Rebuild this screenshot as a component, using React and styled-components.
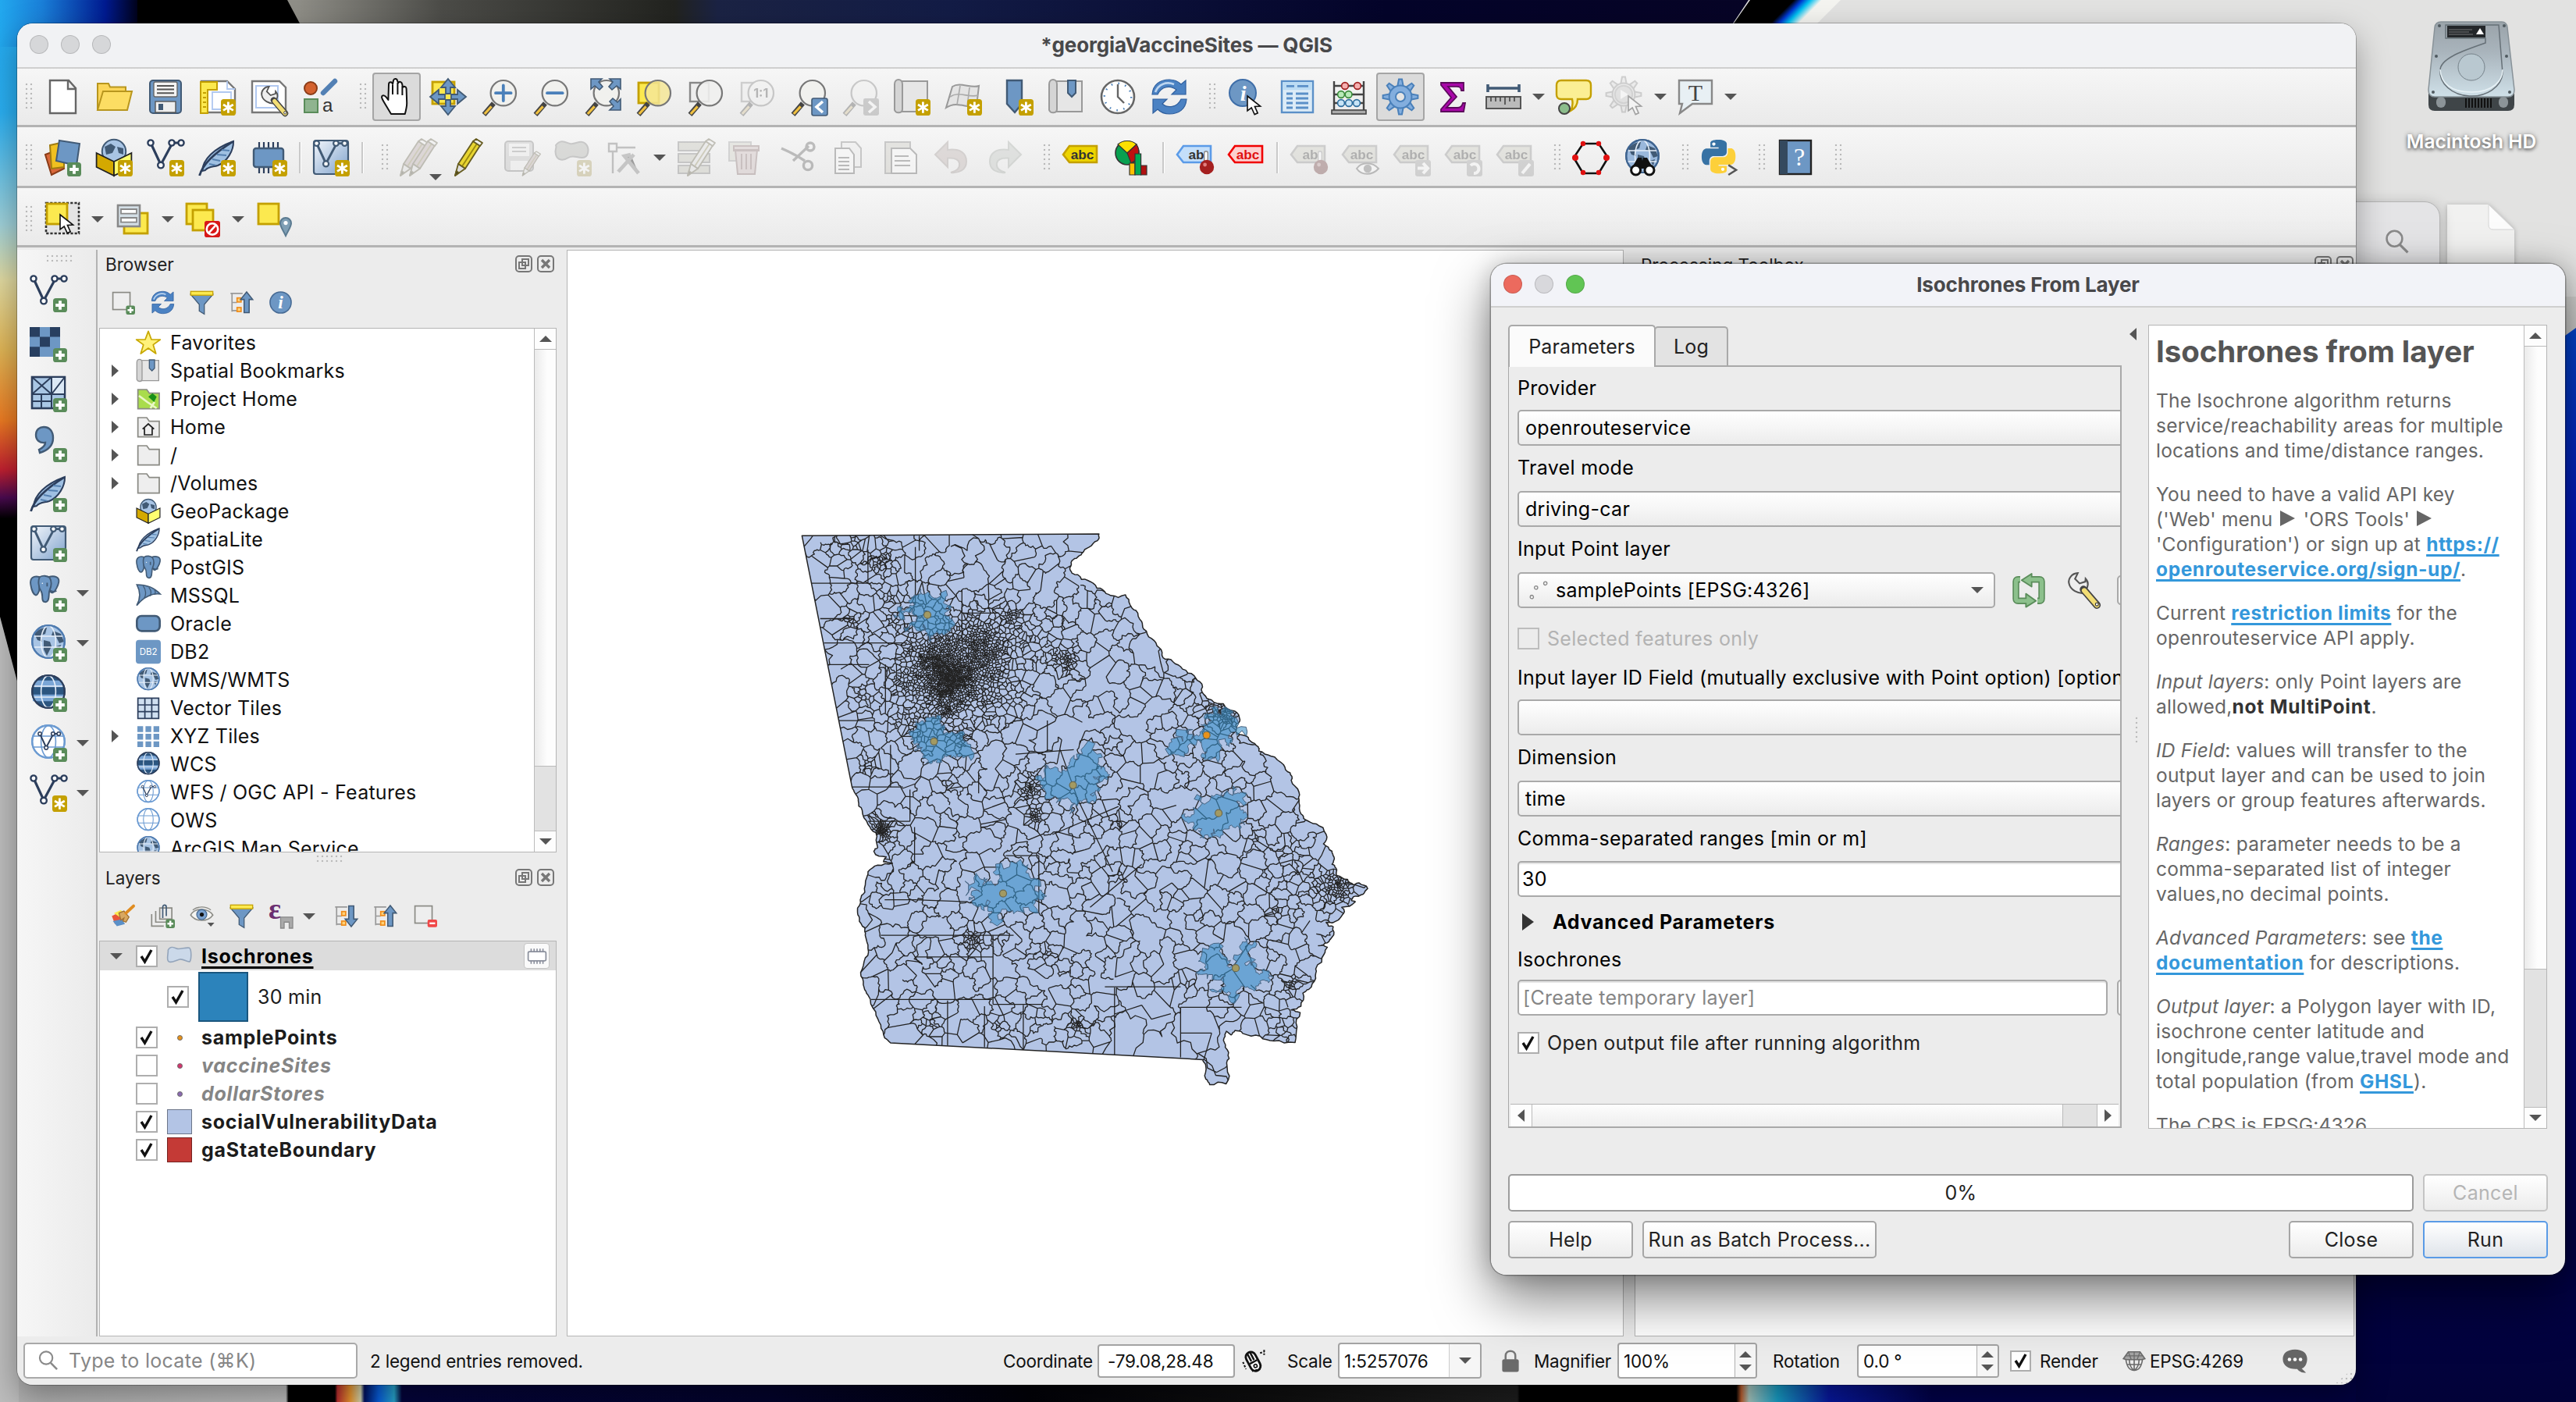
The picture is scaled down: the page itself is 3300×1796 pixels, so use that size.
import React, { useMemo } from 'react';
import styled, { createGlobalStyle, css } from 'styled-components';

const Global = createGlobalStyle`
  * { box-sizing: border-box; }
  html, body { margin: 0; padding: 0; }
  body { font-family: Inter, "Liberation Sans", sans-serif; font-size: 25px; color: #000; overflow: hidden; }
`;

/* ------------------------------------------------------------------ icons */

const NAVY = '#2c3e5c';
const BLUE = '#6d97c4';
const BLUED = '#415a75';
const GOLD = '#c4a000';
const YEL = '#fce94f';

const Plus = () => (
  <g>
    <rect x="15" y="15" width="9" height="9" rx="1.8" fill="#5a8c5a" />
    <path d="M19.5 16.6v5.8M16.6 19.5h5.8" stroke="#fff" strokeWidth="1.9" />
  </g>
);
const Star = () => (
  <g>
    <rect x="14.5" y="13.5" width="9.5" height="10.5" rx="1.8" fill={GOLD} />
    <path d="M19.2 15.2v7.2M16 17l6.4 3.7M16 20.7l6.4-3.7" stroke="#fff" strokeWidth="1.4" />
  </g>
);
const Cursor = ({ x = 12, y = 12 }) => (
  <path transform={`translate(${x} ${y})`} d="M0 0v9.5l2.6-2 2 4.3 2-.9-1.9-4.2 3.6-.2z" fill="#fff" stroke="#111" strokeWidth=".8" />
);
const Lens = ({ sign, fill = '#f1f1ee', pre, children }) => (
  <>
    {pre}
    <path d="M8.2 16.2L2 23.4" stroke="#444" strokeWidth="3.2" />
    <path d="M6.8 18.2L2.4 23" stroke="#f0c040" strokeWidth="1.6" />
    <circle cx="14.4" cy="9.6" r="8.1" fill={fill} stroke="#777" strokeWidth="1.1" />
    {sign && <path d={sign} stroke="#4a80ba" strokeWidth="1.9" strokeLinecap="round" />}
    {children}
  </>
);
const V = ({ s = 1, x = 0, y = 0, c = NAVY }) => (
  <g transform={`translate(${x} ${y}) scale(${s})`} fill="#fff" stroke={c} strokeWidth="1.2">
    <path d="M2.5 2.5L9 16.5L16.5 2.5h6" fill="none" strokeWidth="1.6" />
    <circle cx="2.5" cy="2.5" r="1.8" /><circle cx="9" cy="16.8" r="1.9" />
    <circle cx="16" cy="2.5" r="1.8" /><circle cx="22" cy="2.5" r="1.8" />
  </g>
);
const Feather = () => (
  <>
    <path d="M2.5 20.5C3 13 10 6 22.5 1.5c.2 6-4 13-10 15.500-3 1-6 .5-8 3z" fill="#9fc0e2" stroke={NAVY} strokeWidth="1" />
    <path d="M.8 23.500C3 15 12 8 22 1.800" fill="none" stroke={NAVY} strokeWidth="1.4" />
    <path d="M9 13l5 1M12 10l6 .5M15 7l5 .5M7 16l4 .8" stroke="#5580b0" strokeWidth=".9" />
  </>
);
const Globe = ({ fill = '#a8c4e4', line = '#4f7bb0', land, dark }) => (
  <g>
    <circle cx="12" cy="11" r="10.400" fill={fill} stroke={line} strokeWidth="1.1" />
    {land && <path d="M3 6c3-3 5-4 8-4l-1 4-3 1 1 4-3-1zM9 10l4 1 1 3-3 6-2-4zM15 4l5 2 2 5-3 1-2-4-3-1zM17 14l3-1-1 4z" fill={BLUED} />}
    {dark && <path d="M3 6h18M2 15h20" stroke="#7ba6d6" strokeWidth="4.200" />}
    <g fill="none" stroke={dark || land ? '#e8f0fa' : line} strokeWidth=".8">
      <ellipse cx="12" cy="11" rx="4.700" ry="10.200" /><path d="M2.500 7.500h19M2.500 14.500h19" />
    </g>
    <circle cx="12" cy="11" r="10.400" fill="none" stroke={line} strokeWidth="1.1" />
  </g>
);
const Elephant = () => (
  <g fill={BLUE} stroke={BLUED} strokeWidth="1.2" strokeLinejoin="round">
    <path d="M8 2C3 .5 0 3 .8 8c.6 4 2.200 8 4 8.500 1 .2 2-1.500 2.800-3.500z" />
    <path d="M15 2c5-1.500 9 0 8.300 4-.5 3-3 8-5 8.500-1 .2-2-1-2.500-2z" />
    <path d="M8 2c2.500-1.500 6-1.200 8 .5 1.500 2.500 1.800 6 0 10-1 2 0 6-1.500 8.500-1 1.600-3.800 1.300-4.200-1-.4-2.500.2-5-1.300-7-2-3-2.500-8-1-11z" />
    <circle cx="10.200" cy="7" r=".5" fill="#fff" stroke="none" /><path d="M14 6.500v3M16 12.500c2 1.500 4 1.500 5.500.5" fill="none" />
  </g>
);
const Refresh = () => (
  <g fill="#4b82c3" stroke="#2f5f9e" strokeWidth=".6">
    <path d="M1 10.500C1.500 4 6 1 12 1c3 0 5.500 1 7.500 3L22.500 1.500v9h-9l3-3C13 4.500 7 5 4.500 10.500z" />
    <path d="M23 13.500C22.500 20 18 23 12 23c-3 0-5.500-1-7.500-3L1.500 22.500v-9h9l-3 3c3.500 3 9.500 2.500 12-3z" />
    <path d="M3 9C5 4 10 2 15 4" stroke="#bcd5f0" strokeWidth="1.3" fill="none" />
  </g>
);
const Pencil = ({ c = '#e8d531' }) => (
  <g stroke="#665c20" strokeWidth=".9" strokeLinejoin="round">
    <path d="M4.500 16L14 1.500l4.500 2.800L9 19z" fill={c} /><path d="M7 17.500l9.500-14.500" stroke="#9a8a10" />
    <path d="M4.500 16L2.500 23.500 9 19z" fill="#ddd" /><path d="M3.300 20.500l-.8 3 2.400-1.800z" fill="#222" />
    <path d="M14 1.500l2-1.500 4 2.500-1.500 2z" fill="#eee" />
  </g>
);
const Tag = ({ bg = '#edd400', bd = GOLD, t = 'abc', c = '#333' }) => (
  <>
    <path d="M1 10L5 4.500h17.500v10.500H5z" fill={bg} stroke={bd} strokeWidth="1.300" />
    <text x="13.300" y="12.800" fontSize="8.600" fontWeight="600" textAnchor="middle" fill={c} fontFamily='"Liberation Sans", sans-serif'>{t}</text>
  </>
);
const Pin = () => (<><path d="M19.500 9v6" stroke="#888" strokeWidth="3" strokeLinecap="round" /><path d="M19.500 9v6" stroke="#fff" strokeWidth="1.600" strokeLinecap="round" /><circle cx="20" cy="18" r="4.600" fill="#a52020" /><circle cx="18.800" cy="16.500" r="1.200" fill="#e08080" /></>);
const Badge = ({ d }) => (<><rect x="14.500" y="13.500" width="10" height="10.500" rx="1.500" fill="#999" /><path d={d} fill="none" stroke="#fff" strokeWidth="2" /></>);
const Scroll = () => (<><path d="M4 2h18v19.500H4z" fill="#e6e6e6" stroke="#999" /><path d="M1 4c0-4 5-4 5 0v16c0 2.500-4 3-5 .5z" fill="#d5d5d5" stroke="#999" /></>);
const Ruler = () => (<><path d="M2 4v5M22 4v5M2 6.500h20" stroke={BLUED} strokeWidth="1.800" /><rect x="1" y="12" width="22" height="7.500" fill="#bbb" stroke="#555" /><path d="M4 12v3M7 12v3M10 12v3M13 12v5M16 12v3M19 12v3" stroke="#444" strokeWidth=".8" /></>);
const TreeArrow = ({ down }) => (
  <>
    <path d="M1 3h12M2.500 3v18M2.500 12h5M2.500 20h5" stroke="#999" strokeWidth="1.300" fill="none" />
    <rect x="7.500" y="7.500" width="4" height="4" fill="#ffd27a" stroke="#f08c1a" strokeWidth="1.300" /><rect x="7.500" y="17" width="4" height="4" fill="#ffd27a" stroke="#f08c1a" strokeWidth="1.300" />
    <path transform={down ? 'matrix(1 0 0 -1 0 24)' : undefined} d="M17 1.500l6 7.500h-3.500v13h-5V9H11z" fill={BLUE} stroke={BLUED} strokeWidth="1.200" />
  </>
);
const Folder = ({ fill = '#eee', children }) => (<><path d="M2 21.500V3h8.500l2.500 3.500h9.500v15z" fill={fill} stroke="#8a8a84" strokeWidth="1.300" />{children}</>);
const Box3d = () => (<><circle cx="12" cy="8" r="7.600" fill="#a8c4e4" stroke={BLUED} /><path d="M6 5l4-2 3 2-2 4-4 1zM14 5l4 1v4l-3-1z" fill={BLUED} /><path d="M.8 9L12 14.500V23.500L.8 18z" fill="#d4a900" stroke="#222" strokeWidth=".9" /><path d="M23.200 9L12 14.500V23.500L23.200 18z" fill="#ffff70" stroke="#222" strokeWidth=".9" /></>);
const Wrench = ({ x = 0, y = 0, s = 1 }) => (
  <g transform={`translate(${x} ${y}) scale(${s})`}>
    <path d="M1 6c0-3 3-6 7-5.500L5.500 4l2.500 3.500L12 7l.5-2C14.500 8 13 11 11.500 12l-2 2.500C6 14 1 11 1 6z" fill="#eee" stroke="#555" strokeWidth="1.100" transform="rotate(-10 8 8)" />
    <path d="M10.500 11.500l9 10.500" stroke="#444" strokeWidth="5" strokeLinecap="round" /><path d="M11 12.200l8.500 9.800" stroke="#f2dd74" strokeWidth="3.200" strokeLinecap="round" /><circle cx="19.500" cy="21.500" r="1" fill="#fff" stroke="#333" strokeWidth=".6" />
  </g>
);
const Gear = ({ fill, stroke }) => (
  <g fill={fill} stroke={stroke} strokeWidth="1">
    {[0, 45, 90, 135, 180, 225, 270, 315].map((a) => <path key={a} transform={`rotate(${a} 12 12)`} d="M10.200 5L11 .8h2L13.800 5z" />)}
    <circle cx="12" cy="12" r="7.200" /><circle cx="12" cy="12" r="3" fill="#e4e4e4" />
  </g>
);
const Chip = ({ y = 0 }) => (<g transform={`translate(0 ${y})`}><path d="M6 1v20M9 1v20M12 1v20M15 1v20M18 1v20" stroke={NAVY} strokeWidth="1.100" /><rect x="2.500" y="5" width="19" height="12" rx="1.500" fill={BLUE} stroke={BLUED} strokeWidth="1.200" /></g>);
const VBox = () => (<><defs><linearGradient id="vb" x1="0" y1="0" x2="1" y2="1"><stop offset="0" stopColor="#f2f6fb" /><stop offset="1" stopColor="#7fa2cc" /></linearGradient></defs><rect x="1" y="1" width="22" height="21.500" rx="1.500" fill="url(#vb)" stroke={BLUED} strokeWidth="1.100" /><V s={0.92} x={0.500} y={0.500} c={BLUED} /></>);

const ICONS = {
  newFile: <path d="M4 1.500h12l4.500 5v16H4zM15.500 1.500V7h5" fill="#fff" stroke="#666" strokeWidth="1.200" />,
  open: <><path d="M1.500 20V3.500h7l1 2.200h10V20z" fill="#fbd65a" stroke="#b8961e" /><path d="M1.500 20.500L5 8.500h18.500L20.500 20.500z" fill="#fcdd63" stroke="#b8961e" /></>,
  save: <><rect x="2" y="1.500" width="20" height="21" rx="2" fill={BLUE} stroke={BLUED} /><rect x="4.500" y="2.500" width="15" height="9.500" rx="1" fill="#f3f3f3" stroke="#666" strokeWidth=".7" /><path d="M6.500 5h11M6.500 7.300h11M6.500 9.600h11" stroke="#555" /><rect x="5.500" y="15" width="13" height="7" fill="#eee" stroke="#555" strokeWidth=".7" /><rect x="7.500" y="16.500" width="3" height="4" fill={BLUED} /></>,
  layout: <><path d="M2 2h16.500l5 5v15H2z" fill="#fff" stroke="#777" strokeWidth="1.200" /><path d="M18.500 2v5h5M9 9h12v11H9z" fill="none" stroke="#b0c8f0" strokeWidth=".9" /><path d="M1.500 2.500h10.500v5l-6 0v15h-4.500z" fill={YEL} stroke={GOLD} /><path d="M3 9.500h2M3 12.500h2M3 15.500h2M3 18.500h2" stroke={GOLD} /><Star /></>,
  layoutMgr: <><path d="M1.500 2H19l4 4v16H1.500z" fill="#fff" stroke="#777" strokeWidth="1.200" /><path d="M4 5h14v14H4z" fill="#fff" stroke="#b0c8f0" /><Wrench x={7} y={5} s={0.8} /></>,
  style: <><circle cx="6" cy="6.500" r="4" fill="#d4622f" stroke="#8a3c18" /><path d="M14 9.500l7.500-7.500" stroke="#5280b4" strokeWidth="3.200" strokeLinecap="round" /><rect x="2" y="13.500" width="8.500" height="8.500" fill="#8fb48f" stroke="#5a8c5a" /><text x="13.500" y="21.500" fontSize="12" fill="#333" fontFamily='"Liberation Sans", sans-serif'>a</text></>,
  hand: <path d="M8.500 23L4 15.500c-1.500-2.500-2-3.800-.8-4.300 1.300-.4 2.300 1 3.500 2.800L7 4c0-1.800 2.300-1.900 2.500 0L10 1.500c.4-1.500 2.300-1.300 2.500.2l.6 1.500c.6-1.300 2.300-.9 2.500.7l.4 2.100c.7-1 2.200-.6 2.300.8L18.600 16c0 2-.4 4-1.200 7zM9.500 4.500v6M12.700 3v7.500M15.700 5v6" fill="#fff" stroke="#111" strokeWidth="1" strokeLinejoin="round" />,
  panSel: <><rect x="2" y="2.500" width="14" height="14" fill={YEL} stroke={GOLD} strokeWidth="1.400" /><g fill={BLUE} stroke={BLUED} strokeWidth=".9"><path d="M12 .5l4.500 5.500h-3v4h-3V6h-3z" /><path d="M12 23.500l4.500-5.500h-3v-4h-3v4h-3z" /><path d="M.5 12L6 7.500v3h4v3H6v3z" /><path d="M23.500 12L18 7.500v3h-4v3h4v3z" /></g></>,
  zoomIn: <Lens sign="M9.500 9.600h9.800M14.400 4.700v9.800" />,
  zoomOut: <Lens sign="M9.500 9.600h9.800" />,
  zoomFull: <><Lens /><g fill={BLUE} stroke={BLUED} strokeWidth=".8"><path d="M4.500.5h7l-2 2 2.500 3-2 2-3-2.500-2.500 2z" /><path d="M23.500.5h-7l2 2-2.500 3 2 2 3-2.500 2.500 2z" /><path d="M23.500 20.500v-7l-2 2-3-2.500-2 2 2.500 3-2.500 2.500z" /></g></>,
  zoomSel: <Lens fill="rgba(244,230,150,.85)" pre={<rect x="2" y="3" width="13" height="13" fill={YEL} stroke={GOLD} strokeWidth="1.400" />} />,
  zoomLayer: <Lens fill="rgba(240,240,238,.9)" pre={<rect x="2" y="3" width="12" height="12" fill="#eee" stroke="#888" strokeWidth="1.200" />} />,
  zoomNative: <Lens pre={<rect x="2" y="3" width="12" height="12" fill="#eee" stroke="#888" strokeWidth="1.200" />}><text x="14.400" y="12.500" fontSize="8" fontWeight="700" textAnchor="middle" fill="#444">1:1</text></Lens>,
  zoomLast: <Lens><rect x="14" y="13" width="10" height="11" rx="1.200" fill={BLUE} stroke={BLUED} strokeWidth=".8" /><path d="M21 15l-4 3.500 4 3.500" fill="none" stroke="#fff" strokeWidth="1.800" /></Lens>,
  zoomNext: <Lens><rect x="14" y="13" width="10" height="11" rx="1.200" fill="#888" /><path d="M17.500 15l4 3.500-4 3.500" fill="none" stroke="#fff" strokeWidth="1.800" /></Lens>,
  newMap: <><Scroll /><Star /></>,
  new3d: <><path d="M5 5.500C10 2 17 7 22 5l-1.500 13c-6 2-12-4-19.500 1z" fill="#e4e4e4" stroke="#999" /><path d="M3.500 12c6-4 12 1 18-1M10 5l-2 12M16 6l-1.500 12" fill="none" stroke="#aaa" strokeWidth=".8" /><Star /></>,
  bookmark: <><path d="M7 1.500h9.500v15L12 22l-5-5.500z" fill={BLUE} stroke={BLUED} strokeWidth="1.200" /><Star /></>,
  bookmarks: <><Scroll /><path d="M13 1.500h5v8L15.500 12 13 9.500z" fill={BLUE} stroke={BLUED} /></>,
  clock: <><circle cx="12" cy="12" r="10.500" fill="#fff" stroke="#666" strokeWidth="1.300" /><circle cx="12" cy="12" r="8.600" fill="none" stroke="#4a80ba" strokeWidth="1.200" strokeDasharray=".8 3.700" /><path d="M12 4v8l4 4" fill="none" stroke="#666" strokeWidth="1.200" /></>,
  refresh: <Refresh />,
  identify: <><circle cx="10" cy="9.500" r="8.500" fill={BLUE} stroke="#3f6ea8" /><text x="10.300" y="14.500" fontSize="14" fontStyle="italic" fontWeight="700" textAnchor="middle" fill="#fff" fontFamily='"Liberation Serif", serif'>i</text><Cursor x={13} y={11.500} /></>,
  table: <><rect x="2" y="2" width="20" height="20" fill="#dcebf7" stroke="#5b90c8" strokeWidth="1.200" /><rect x="2.600" y="2.600" width="18.800" height="5" fill="#bcdcf4" /><path d="M5 5.200h5M12 5.200h7M5 10h4M11 10h8M5 13h4M11 13h8M5 16h4M11 16h8M5 19h4M11 19h8" stroke="#5b90c8" strokeWidth="1.400" /></>,
  abacus: <><path d="M2.500 2v19M21.500 2v19M2.500 5h19M2.500 10.500h19M2.500 16h19" stroke="#444" strokeWidth="1.200" /><rect x="1" y="20.500" width="22" height="2.500" fill="#aaa" stroke="#444" strokeWidth=".8" /><g strokeWidth=".8"><circle cx="9.500" cy="5" r="2.200" fill="#f5b0b0" stroke="#a02020" /><circle cx="17.500" cy="5" r="2.200" fill="#f5b0b0" stroke="#a02020" /><circle cx="7" cy="10.500" r="2.200" fill="#b8eab8" stroke="#3a8a3a" /><circle cx="11.800" cy="10.500" r="2.200" fill="#b8eab8" stroke="#3a8a3a" /><circle cx="7" cy="16" r="2.200" fill="#c8e4f6" stroke="#2f6f9f" /><circle cx="12" cy="16" r="2.200" fill="#c8e4f6" stroke="#2f6f9f" /><circle cx="17" cy="16" r="2.200" fill="#c8e4f6" stroke="#2f6f9f" /></g></>,
  gear: <Gear fill="#83aede" stroke="#4a80ba" />,
  sigma: <path d="M5 3h14.500v5h-1.500c-.3-2-1-2.600-3-2.600H9.500l5.500 6.600-6.500 7h7c2 0 3-1 3.500-3h1.500L19.500 21.500H5V20l6.500-7.500L5 4.500z" fill="#a808a8" stroke="#5c0a5c" strokeWidth=".9" />,
  measure: <Ruler />,
  tip: <><path d="M4 1.500h16c2 0 3 1 3 3v6c0 2-1 3-3 3h-5.500c0 3-1.500 6-4.500 7.500 1.500-2.500 1.500-5 1-7.500H4c-2 0-3-1-3-3v-6c0-2 1-3 3-3z" fill="#fbef94" stroke={GOLD} strokeWidth="1.200" /><circle cx="6" cy="19.500" r="3.500" fill="#8cbd8c" stroke="#444" /></>,
  gearGrey: <><g transform="translate(-1 -1.500)"><Gear fill="#ddd" stroke="#888" /></g><circle cx="11" cy="10.500" r="5.600" fill="#c4c4c4" stroke="#999" /><path d="M9 7.500l5 3-5 3z" fill="#fff" /><Cursor x={14} y={11.500} /></>,
  annot: <><path d="M1.500 1.500h21v15H10l-8 6 1.500-6h-2z" fill="#e8f0f4" stroke="#888" strokeWidth="1.200" /><text x="12" y="14.500" fontSize="15" textAnchor="middle" fill="#444" fontFamily='"Liberation Serif", serif'>T</text></>,
  addLayer: <><path d="M1 10l8-3 4 12-8 4z" fill="#d9683a" stroke="#8a3c18" /><path d="M4 4l9-2v16l-8 1z" fill="#f0c020" stroke="#a07c10" /><path d="M10 1l13 2-2 14-13-3z" fill={BLUE} stroke={BLUED} /><Plus /></>,
  gpkgNew: <><Box3d /><Star /></>,
  vNew: <><V /><Star /></>,
  featherNew: <><Feather /><Star /></>,
  chipNew: <><Chip y={1} /><Star /></>,
  vboxNew: <><VBox /><Star /></>,
  pencils: <><g transform="translate(-2 0)"><Pencil c="#c8a0a0" /></g><g transform="translate(4 0)"><Pencil c="#c8a0a0" /></g></>,
  pencil: <Pencil />,
  saveEd: <><rect x="1.500" y="1.500" width="18" height="19" rx="2" fill="#bbb" stroke="#777" /><rect x="4" y="3" width="13" height="8" fill="#eee" /><path d="M6 5.500h9M6 8h9" stroke="#888" /><rect x="5" y="14" width="11" height="6" fill="#eee" /><g transform="translate(11 8) scale(.66)"><Pencil c="#c8a0a0" /></g></>,
  addFeat: <><path d="M1 4c3-4 6-2 9-1s7-3 10 0 2 9-2 9-6-2-9 0-7 2-8-2 1-4 0-6z" fill="#a9b0a0" stroke="#777" /><Star /></>,
  vertex: <><path d="M2 3h5v5H2zM4.500 8v14M7 5.500h12" fill="none" stroke="#666" strokeWidth="1.200" /><path d="M8 21L18 10M21 22L12 11l4-1" stroke="#777" strokeWidth="2.400" /></>,
  multiEdit: <><path d="M1.500 2h20v5.500h-20zM1.500 9.500h20V15h-20zM1.500 17h20v5h-20z" fill="#c0c0a0" stroke="#777" /><g transform="translate(5 0)"><Pencil c="#ddd" /></g></>,
  trash: <><path d="M1 2h14v12H1z" fill="#d0d0b0" stroke="#999" /><path d="M5 7h14l-1.500 15.500h-11zM4 4.500h16v3H4zM9 9.500v10M12 9.500v10M15 9.500v10" fill="#e0b0b0" stroke="#a06060" /></>,
  cut: <g fill="none" stroke="#555" strokeWidth="1.700"><path d="M1.500 6c7 3 12 6 15 8M9 14l10-9.500" /><circle cx="20" cy="5" r="2.500" /><circle cx="18.500" cy="17" r="2.800" /></g>,
  copy: <><path d="M7 2h9l3.500 4v12H7z" fill="#eee" stroke="#777" /><path d="M3 6h9l3 4v12H3z" fill="#fff" stroke="#555" /><path d="M5 12h7M5 14.500h7M5 17h7M5 19.500h7" stroke="#555" /></>,
  paste: <><path d="M2 2h16v20H2z" fill="#ccc8b0" stroke="#777" /><path d="M6 6h12l4 4v12H6z" fill="#fff" stroke="#555" /><path d="M8 11h9M8 14h10M8 17h10" stroke="#555" /></>,
  undo: <path d="M1 10L9 2v5c8-1 12 2 12 7.500S16 22 11 21.500c4-1 6-3 5.500-6-.5-2.500-3-3.500-7.500-3.200V18z" fill="#c8a8a0" stroke="#a89088" />,
  redo: <path d="M23 10L15 2v5C7 6 3 9 3 14.500S8 22 13 21.500c-4-1-6-3-5.500-6 .5-2.500 3-3.500 7.500-3.200V18z" fill="#b8c4b8" stroke="#98a898" />,
  tag: <Tag />,
  pie: <><circle cx="9" cy="9" r="7.500" fill="#08a050" stroke="#333" strokeWidth=".8" /><path d="M9 9L3 3.500C6 .5 12 .5 15 3.500z" fill="#fce000" stroke="#333" strokeWidth=".6" /><path d="M9 9l6-5.500c2.500 4 2 9-3.500 12z" fill="#c01010" stroke="#333" strokeWidth=".6" /><path d="M10.500 15.500h3.500v7.500h-3.500z" fill="#fcc000" stroke="#333" strokeWidth=".6" /><path d="M14 9.500h3.800v13.500H14z" fill="#0a5" stroke="#333" strokeWidth=".6" /><path d="M17.800 17h3.700v6h-3.700z" fill="#b01010" stroke="#333" strokeWidth=".6" /></>,
  tagPin: <><Tag bg="#c4dffa" bd="#5b9be8" t="ab" /><Pin /></>,
  tagRed: <Tag bg="#fcd0d0" bd="#f00000" c="#e01010" />,
  tagPinG: <><Tag bg="#c8c8a8" bd="#888" t="ab" /><Pin /></>,
  tagEye: <><Tag bg="#c8c8a8" bd="#888" /><path d="M10 19c3-4.500 10-4.500 14 0-4 4.500-11 4.500-14 0z" fill="#fff" stroke="#555" /><circle cx="17" cy="19" r="2.600" fill="#666" /></>,
  tagMove: <><Tag bg="#c8c8a8" bd="#888" /><Badge d="M16 18.800h6M19.500 15.500l3 3.300-3 3.300" /></>,
  tagRot: <><Tag bg="#c8c8a8" bd="#888" /><Badge d="M17 17a3 3 0 1 1 2 5" /></>,
  tagEdit: <><Tag bg="#c8c8a8" bd="#888" /><Badge d="M17 22l5-6" /></>,
  hex: <><path d="M7 3h10l6 9-6 10H7l-6-10z" fill="none" stroke="#111" strokeWidth="1.300" /><g fill="#e01010"><circle cx="7" cy="3" r="1.600" /><circle cx="17" cy="3" r="1.600" /><circle cx="22" cy="12" r="2" /><circle cx="17" cy="21.500" r="1.600" /><circle cx="7" cy="21.500" r="1.600" /><circle cx="2" cy="12" r="2" /></g></>,
  globeBin: <><Globe land fill="#9ab8dc" line="#3f6490" /><path d="M9 12h2.500l.5 2 .5-2H15l4 7H5z" fill="#111" /><circle cx="7.800" cy="20" r="3" fill="#fff" stroke="#111" strokeWidth="1.500" /><circle cx="16.500" cy="20" r="3" fill="#fff" stroke="#111" strokeWidth="1.500" /></>,
  python: <g transform="translate(1 .5) scale(.9)"><path fill="#3772a4" d="M14.250.18l.9.2.73.26.59.3.45.32.34.34.25.34.16.33.1.3.04.26.02.2-.01.13V8.5l-.05.63-.13.55-.21.46-.26.38-.3.31-.33.25-.35.19-.35.14-.33.1-.3.07-.26.04-.21.02H8.770l-.69.05-.59.14-.5.22-.41.27-.33.32-.27.35-.2.36-.15.37-.1.35-.07.32-.04.27-.02.21v3.060H3.170l-.21-.03-.28-.07-.32-.12-.35-.18-.36-.26-.36-.36-.35-.46-.32-.59-.28-.73-.21-.88-.14-1.050-.05-1.230.06-1.220.16-1.040.24-.87.32-.71.36-.57.4-.44.42-.33.42-.24.4-.16.36-.1.32-.05.24-.01h.16l.06.01h8.160v-.83H6.180l-.01-2.750-.02-.37.05-.34.11-.31.17-.28.25-.26.31-.23.38-.2.44-.18.51-.15.58-.12.64-.1.71-.06.77-.04.84-.02 1.270.05z" /><path fill="#fdd03a" d="M21.040 6.110l.28.06.32.12.35.18.36.27.36.35.35.47.32.59.28.73.21.88.14 1.040.05 1.230-.06 1.230-.16 1.040-.24.86-.32.71-.36.57-.4.45-.42.33-.42.24-.4.16-.36.09-.32.05-.24.02-.16-.01h-8.220v.82h5.840l.01 2.760.02.36-.05.34-.11.31-.17.29-.25.25-.31.24-.38.2-.44.17-.51.15-.58.13-.64.09-.71.07-.77.04-.84.01-1.270-.04-1.070-.14-.9-.2-.73-.25-.59-.3-.45-.33-.34-.34-.25-.34-.16-.33-.1-.3-.04-.25-.02-.2.01-.13v-5.340l.05-.64.13-.54.21-.46.26-.38.3-.32.33-.24.35-.2.35-.14.33-.1.3-.06.26-.04.21-.02.13-.01h5.840l.69-.05.59-.14.5-.21.41-.28.33-.32.27-.35.2-.36.15-.36.1-.35.07-.32.04-.28.02-.21V6.070h2.090l.14.01z" /><circle cx="8.600" cy="3.100" r="1.200" fill="#fff" /><circle cx="15" cy="21" r="1.200" fill="#fff" /><path d="M19 18l5.500 3.500-5.500 3.500" fill="none" stroke="#555" strokeWidth="1.400" /></g>,
  book: <><rect x="2" y="1" width="20" height="21.500" fill={BLUE} stroke="#222" strokeWidth="1.200" /><rect x="2" y="1" width="5" height="21.500" fill="#34495e" /><text x="14.500" y="17" fontSize="16" textAnchor="middle" fill="#fff" fontFamily='"Liberation Serif", serif'>?</text></>,
  selRect: <><path d="M1.500 1.500h21v19.500h-21z" fill="#e4e4e4" stroke="#333" strokeWidth="1.300" strokeDasharray="1.600 1" /><rect x="2" y="2" width="13" height="13" fill={YEL} stroke={GOLD} strokeWidth="1.400" /><Cursor x={10.500} y={9} /></>,
  selForm: <><rect x="6.500" y="8" width="15" height="13" fill={YEL} stroke={GOLD} strokeWidth="1.400" /><rect x="2.500" y="3" width="14" height="13.500" fill="#d4dfe6" stroke="#888" strokeWidth="1.300" /><path d="M4.500 5.500h10v2.800h-10zM4.500 11h10v2.800h-10z" fill="#fff" stroke="#888" strokeWidth=".9" /></>,
  selNone: <><rect x="1.500" y="2" width="13" height="13" fill={YEL} stroke={GOLD} strokeWidth="1.400" /><rect x="5.500" y="6" width="13" height="13" fill={YEL} stroke={GOLD} strokeWidth="1.400" /><rect x="13" y="13" width="10" height="10.500" rx="1.400" fill="#d81818" /><circle cx="18" cy="18.200" r="3.600" fill="none" stroke="#fff" strokeWidth="1.300" /><path d="M15.600 20.800l4.800-5.200" stroke="#fff" strokeWidth="1.300" /></>,
  selPin: <><rect x="2.500" y="2" width="13" height="13" fill={YEL} stroke={GOLD} strokeWidth="1.400" /><path d="M20 22.500c-2-4-3.500-6-3.500-8a3.500 3.500 0 0 1 7 0c0 2-1.500 4-3.500 8z" fill="#7f9fb5" stroke="#5a7a90" /><circle cx="20" cy="14.300" r="1.300" fill="#fff" /></>,
  vAdd: <><V /><Plus /></>,
  raster: <><path d="M0 1.500h19.500v19H0z" fill={BLUE} /><path d="M0 1.500h6.500v6.300H0zM13 1.500h6.500v6.300H13zM6.500 7.800H13v6.300H6.500zM0 14.100h6.500v6.400H0z" fill="#283f60" /><Plus /></>,
  mesh: <><rect x="1.500" y="1.500" width="21" height="20" fill="#a9c6e4" stroke={NAVY} strokeWidth="1.300" /><rect x="14" y="1.500" width="8.500" height="11" fill="#dbe8f5" stroke={NAVY} /><path d="M14 1.500v20M1.500 12.500h21M1.500 1.500l12.500 11M14 1.500l-12.500 11M22.500 1.500L14 12.500M7.500 12.500v9M1.500 17H14" stroke={NAVY} strokeWidth="1" /><Plus /></>,
  comma: <><path d="M4 6.500C4 3 6.500 1.500 9 1.500c4 0 6 3 6 7 0 5-3.500 8-8.500 9.500L6 16c3-1.500 4-3 4-4.500-3.500.5-6-1.500-6-5z" fill={BLUE} stroke={BLUED} strokeWidth="1.200" /><Plus /></>,
  featherAdd: <><Feather /><Plus /></>,
  vboxAdd: <><VBox /><Plus /></>,
  pgAdd: <><g transform="scale(.8)"><Elephant /></g><Plus /></>,
  wmsAdd: <><Globe land /><Plus /></>,
  wcsAdd: <><Globe dark fill="#2c5680" line="#2c3e5c" /><Plus /></>,
  wfsAdd: <><Globe fill="#fff" line="#6c9bd2" /><V s={0.62} x={5} y={4.500} /><Plus /></>,
  addBox: <><rect x="2" y="2" width="17" height="17" fill="#eee" stroke="#8a8a84" strokeWidth="1.300" /><Plus /></>,
  filter: <><path d="M1 4h22l-8.500 10v9.500l-5-3V14z" fill={BLUE} stroke={BLUED} /><rect x="1" y="1" width="22" height="3.800" fill={YEL} stroke={GOLD} /></>,
  treeUp: <TreeArrow />,
  treeDown: <TreeArrow down />,
  info: <><circle cx="12" cy="12" r="10.500" fill={BLUE} stroke="#466a94" strokeWidth="1.200" /><text x="12" y="18" fontSize="18" fontStyle="italic" fontWeight="700" textAnchor="middle" fill="#fff" fontFamily='"Liberation Serif", serif'>i</text></>,
  fav: <path d="M12 1l3 8h8.500l-6.800 5 2.600 8.500L12 17.300 4.700 22.500 7.300 14 .5 9H9z" fill="#fff27a" stroke="#c8a800" strokeWidth="1.300" strokeLinejoin="round" />,
  projHome: <Folder fill="#a9dc4c"><path d="M3 9l8 6 9 6M14 21l4-6" stroke="#eaf7c8" strokeWidth="2" fill="none" /><path d="M12 10l4-3.500 4 3.500-2.500 5z" fill="#189018" /></Folder>,
  home: <Folder><path d="M6.500 14l5.500-5 5.500 5M8.300 13v6.500h7.400V13" fill="none" stroke="#222" strokeWidth="1.300" /></Folder>,
  folder: <Folder />,
  gpkg: <Box3d />,
  feather: <Feather />,
  pg: <Elephant />,
  mssql: <><path d="M1 1.500c7 0 16 2 22.500 9C15 9.500 7 14 .8 21.500 5 14 4.500 8 1 1.500z" fill={BLUE} stroke={BLUED} strokeWidth="1.200" /><path d="M7 2.500c3 4 3 9 1 12M12.500 4c2.500 3 2.500 6 1 8.500M18 6.500c1 1.500 1 3 0 4.500" fill="none" stroke={BLUED} /></>,
  oracle: <rect x="1" y="4.500" width="22" height="14.500" rx="4.500" fill={BLUE} stroke={BLUED} strokeWidth="2" />,
  db2: <><rect x="0" y=".5" width="24" height="23" rx="3" fill={BLUE} /><text x="12" y="14.800" fontSize="8.600" textAnchor="middle" fill="#fff">DB2</text></>,
  wms: <Globe land />,
  vtiles: <><path d="M2 2.500h20v19.500H2z" fill="#cfdff0" /><path d="M2 2.500h20v19.500H2zM8.700 2.500v19.500M15.300 2.500v19.500M2 9h20M2 15.500h20" fill="none" stroke={NAVY} strokeWidth="1.300" /></>,
  xyz: <path d="M1.500 2.500h5.500v5.500H1.500zM9.300 2.500h5.500v5.500H9.300zM17 2.500h5.500v5.500H17zM1.500 9.800h5.500v5.500H1.500zM9.300 9.800h5.500v5.500H9.300zM17 9.800h5.500v5.500H17zM1.500 17h5.500v5.500H1.500zM9.300 17h5.500v5.500H9.300zM17 17h5.500v5.500H17z" fill={BLUE} />,
  wcs: <Globe dark fill="#2c5680" line="#2c3e5c" />,
  wfs: <><Globe fill="#fff" line="#6c9bd2" /><V s={0.6} x={5} y={5} /></>,
  ows: <Globe fill="#fff" line="#6c9bd2" />,
  brush: <><path d="M1 12l8-4 6 8-11 4z" fill="#e8553a" /><path d="M3 9l7-3 6 8-4 1z" fill="#fce94f" /><path d="M2 17l9-2 3 5-8 2z" fill="#5b90c8" /><path d="M8 9l5-2 5 6-3 5-3-1 1-3-3 2z" fill="#d8a860" stroke="#a07030" /><path d="M15 9l7.500-7" stroke="#e08c20" strokeWidth="3" strokeLinecap="round" /></>,
  group: <><path d="M1 10v12h12M5 7v11h13M9 4h12v11H9z" fill="none" stroke="#8a8a84" strokeWidth="1.300" /><path d="M12 14V3c0-2.500 3.500-2.500 3.500 0v9" fill="none" stroke={BLUED} strokeWidth="1.300" /><Plus /></>,
  eye: <><path d="M1 11C5 3.500 18 3.500 23 11 18 18 6 18 1 11z" fill="#f4f4f2" stroke="#8a8a84" strokeWidth="1.200" /><path d="M3 6c5-4 13-4 18 0" fill="none" stroke="#8a8a84" /><circle cx="12" cy="10.500" r="5" fill="#7ba2cf" stroke="#466a94" /><circle cx="12" cy="10.500" r="2" fill="#111" /><path d="M17.500 18.500h7l-3.500 4z" fill="#555" /></>,
  eps: <><text x="0" y="15" fontSize="29" fontWeight="700" fill="#6b2f70" fontFamily='"Liberation Serif", serif'>ε</text><path d="M12 13h12v11h-3.500v-6h-5v6H12z" fill="#aaa" stroke="#888" /></>,
  remove: <><rect x="2" y="2" width="17" height="17" fill="#eee" stroke="#8a8a84" strokeWidth="1.300" /><rect x="14.500" y="15.500" width="9.500" height="7.500" rx="1.500" fill="#f04848" /><path d="M16.500 19.200h5.500" stroke="#fff" strokeWidth="1.800" /></>,
  poly: <path d="M1 6c2-4 5-3 8-1.500S18 3 21.500 4c2 1.500 2 10 .5 13-3 1-6-3-10-2s-8 4-10.500 2S1.500 9 1 6z" fill="#cbd9ea" stroke="#93a4ba" strokeWidth="1.200" />,
  memChip: <><path d="M5 3v18M8.500 3v18M12 3v18M15.500 3v18M19 3v18" stroke="#8a8f9c" strokeWidth="1.500" /><rect x="1.500" y="6.500" width="21" height="11" rx="1.500" fill="#fff" stroke="#8a8f9c" strokeWidth="1.600" /></>,
  points: <g fill="#f4f4f4" stroke="#888" strokeWidth="1.200"><circle cx="4" cy="20" r="2" /><circle cx="9" cy="9" r="2" /><circle cx="20" cy="4" r="2" /></g>,
  loop: <g fill="none" strokeLinejoin="round"><path d="M6 4.500H4.500c-1 0-1.500.5-1.500 1.500v12c0 1 .5 1.500 1.500 1.500H12M18 19.500h1.500c1 0 1.500-.5 1.500-1.500V6c0-1-.5-1.500-1.500-1.500H12" stroke="#5a8c5a" strokeWidth="4.600" /><path d="M14 .5L7 5l7 4.500zM10 14.500l7 5-7 4.300z" fill="#8cc08c" stroke="#5a8c5a" /><path d="M6 4.500H4.500c-1 0-1.500.5-1.500 1.500v12c0 1 .5 1.500 1.500 1.500H12M18 19.500h1.500c1 0 1.500-.5 1.500-1.500V6c0-1-.5-1.500-1.500-1.500H12" stroke="#8cc08c" strokeWidth="2.800" /></g>,
  wrench: <Wrench x={1} />,
  search: <><circle cx="9.500" cy="9" r="7" fill="none" stroke="#8a8a8a" strokeWidth="1.800" /><path d="M14.500 14.500l7 7" stroke="#8a8a8a" strokeWidth="2.200" /></>,
  mouse: <><g transform="rotate(-28 12 12)"><rect x="6" y="2" width="10" height="20" rx="5" fill="#fff" stroke="#111" strokeWidth="2.200" /><path d="M9.500 3v8M12.500 3v8M7 12.500h8" stroke="#111" strokeWidth="1.900" /><circle cx="11" cy="17" r="1.600" fill="none" stroke="#111" strokeWidth="1.300" /></g><path d="M18 4l4-1M22 1v5M1 13l3 7M10 22l8-2" stroke="#111" strokeWidth="1.600" strokeDasharray="2 1.500" /></>,
  lock: <><path d="M7 11V7c0-6.500 10-6.500 10 0v4" fill="none" stroke="#777" strokeWidth="2" /><rect x="3.500" y="10.500" width="17" height="13" rx="2" fill="#6a6a6a" /></>,
  crs: <g fill="none" stroke="#6a6a6a" strokeWidth="1.300"><path d="M1 10l5-7h12l5 7-3 1H4z" fill="#a4a4a4" /><path d="M6 3l3 8M12 3v8M18 3l-3 8M3.500 7h17" strokeWidth="1" /><path d="M3.500 11c1 7 4 11 8.500 11s7.500-4 8.500-11M7 11c0 6 2 9 5 11 3-2 5-5 5-11M12 11v11M4.500 16h15" /></g>,
  bubble: <><path d="M12 2c7 0 11 3.500 11 8.500S20 19 18 19l4 4c-4 0-6.500-1.500-8-3.500C7 20 1 17 1 10.500 1 5.500 5 2 12 2z" fill="#666" /><circle cx="7" cy="11" r="1.600" fill="#fff" /><circle cx="12" cy="11" r="1.600" fill="#fff" /><circle cx="17" cy="11" r="1.600" fill="#fff" /></>,
};

const IconSvg = styled.svg`
  display: block; flex: none; overflow: visible;
  width: ${(p) => p.$s}px; height: ${(p) => p.$s}px;
  ${(p) => p.$dim && css`opacity: .34; filter: grayscale(.6);`}
`;
const Icon = ({ n, s = 48, dim }) => <IconSvg viewBox="0 0 24 24" $s={s} $dim={dim}>{ICONS[n]}</IconSvg>;

const Tri = styled.i`
  flex: none; width: 0; height: 0; border: solid transparent;
  ${(p) => p.$dir === 'down' && css`border-width: 8px 8px 0; border-top-color: ${p.$c || '#555'};`}
  ${(p) => p.$dir === 'up' && css`border-width: 0 8px 8px; border-bottom-color: ${p.$c || '#555'};`}
  ${(p) => p.$dir === 'right' && css`border-width: 8px 0 8px 9px; border-left-color: ${p.$c || '#555'};`}
  ${(p) => p.$dir === 'left' && css`border-width: 8px 9px 8px 0; border-right-color: ${p.$c || '#555'};`}
  ${(p) => p.$big && css`border-width: 11px 0 11px 15px;`}
`;

/* ---------------------------------------------------------------- desktop */

const Desktop = styled.div`
  position: relative; width: 3300px; height: 1796px; overflow: hidden; background: #e2e2e1;
`;
const Wall = styled.svg`position: absolute; inset: 0; width: 3300px; height: 1796px;`;

const Wallpaper = () => (
  <Wall viewBox="0 0 3300 1796">
    <defs>
      <linearGradient id="topB" x1="0" x2="180" y1="0" y2="0" gradientUnits="userSpaceOnUse">
        <stop offset="0" stopColor="#22a8ee" /><stop offset=".3" stopColor="#1a7fd8" /><stop offset=".75" stopColor="#001a90" /><stop offset="1" stopColor="#000010" />
      </linearGradient>
      <linearGradient id="topG" x1="380" x2="2240" y1="0" y2="0" gradientUnits="userSpaceOnUse">
        <stop offset="0" stopColor="#8f8e87" /><stop offset=".1" stopColor="#4c4c48" /><stop offset=".26" stopColor="#22231f" /><stop offset=".29" stopColor="#1b2344" /><stop offset=".45" stopColor="#131c46" /><stop offset=".75" stopColor="#04042a" /><stop offset="1" stopColor="#070426" />
      </linearGradient>
      <linearGradient id="edge" x1="0" x2="36" y1="0" y2="0" gradientUnits="userSpaceOnUse">
        <stop offset="0" stopColor="#000" /><stop offset=".3" stopColor="#0038d0" /><stop offset=".6" stopColor="#00c0f0" /><stop offset="1" stopColor="#f4f4f0" />
      </linearGradient>
      <linearGradient id="left" x1="0" x2="0" y1="0" y2="1796" gradientUnits="userSpaceOnUse">
        <stop offset="0" stopColor="#22a8ee" /><stop offset=".08" stopColor="#2aaef0" /><stop offset=".16" stopColor="#9fd0d8" /><stop offset=".2" stopColor="#e0d9a0" /><stop offset=".25" stopColor="#dfb455" /><stop offset=".3" stopColor="#ea7a22" /><stop offset=".335" stopColor="#c02030" /><stop offset=".355" stopColor="#4a0a50" /><stop offset=".37" stopColor="#000" />
      </linearGradient>
      <linearGradient id="right" x1="0" x2="0" y1="420" y2="1796" gradientUnits="userSpaceOnUse">
        <stop offset="0" stopColor="#0048d8" /><stop offset=".2" stopColor="#0012c0" /><stop offset=".5" stopColor="#0000a0" /><stop offset=".85" stopColor="#02024a" /><stop offset="1" stopColor="#020238" />
      </linearGradient>
      <linearGradient id="bot" x1="0" x2="3300" y1="0" y2="0" gradientUnits="userSpaceOnUse">
        <stop offset="0" stopColor="#b2b2b2" /><stop offset=".111" stopColor="#c0c0c0" /><stop offset=".112" stopColor="#000" /><stop offset=".13" stopColor="#000" /><stop offset=".131" stopColor="#c03030" /><stop offset=".136" stopColor="#f09a30" /><stop offset=".14" stopColor="#d8d8b0" /><stop offset=".1415" stopColor="#001060" /><stop offset=".147" stopColor="#0860e0" /><stop offset=".153" stopColor="#28a8d0" /><stop offset=".156" stopColor="#04043c" /><stop offset=".3" stopColor="#03032c" /><stop offset=".4" stopColor="#020208" /><stop offset=".5" stopColor="#101010" /><stop offset=".589" stopColor="#1e1e1e" /><stop offset=".59" stopColor="#000" /><stop offset=".674" stopColor="#000" /><stop offset=".676" stopColor="#c06030" /><stop offset=".679" stopColor="#a8c8c0" /><stop offset=".69" stopColor="#18a0c8" /><stop offset=".71" stopColor="#0818a0" /><stop offset=".75" stopColor="#02024a" /><stop offset="1" stopColor="#020238" />
      </linearGradient>
    </defs>
    <rect width="3300" height="1796" fill="#e2e2e1" />
    <rect y="1400" width="3300" height="396" fill="url(#bot)" />
    <path d="M0 0h22v1796H0z" fill="url(#left)" />
    <path d="M0 790L24 880V1796H0z" fill="#bdbdbd" />
    <path d="M0 0h180v60H0z" fill="url(#topB)" />
    <path d="M176 0H390V40H176z" fill="#000" />
    <path d="M368 0H2240L2200 60H400z" fill="url(#topG)" />
    <path d="M0 60h22V60z" />
    <path d="M2242 0H2312L2270 60H2200z" fill="#000" />
    <g transform="translate(2298 0) skewX(-45)"><rect x="0" y="0" width="60" height="60" fill="url(#edge)" /></g>
    <path d="M3018 440L3300 400V1796H3018z" fill="url(#right)" />
    <path d="M3018 460L3286 430L3300 420V380H3018z" fill="#d4d4d2" />
  </Wall>
);

const DriveSpot = styled.figure`
  position: absolute; left: 3066px; top: 24px; width: 200px; margin: 0;
  display: flex; flex-direction: column; align-items: center; gap: 20px;
`;
const DriveName = styled.figcaption`
  color: #fff; font-size: 24.500px; font-weight: 600; letter-spacing: 0; white-space: nowrap;
  text-shadow: 0 2px 4px rgba(0,0,0,.55), 0 0 6px rgba(0,0,0,.3);
`;
const Drive = () => (
  <DriveSpot>
    <svg width="114" height="122" viewBox="0 0 114 122">
      <defs><linearGradient id="hd" x1="0" y1="0" x2="0" y2="1"><stop offset="0" stopColor="#9aa3a9" /><stop offset=".4" stopColor="#a9b4bc" /><stop offset="1" stopColor="#cfe0e8" /></linearGradient></defs>
      <path d="M2 96h110v14q0 8-8 8H10q-8 0-8-8z" fill="#3f4548" />
      <rect x="12" y="100" width="12" height="14" rx="6" fill="#8c9498" /><rect x="92" y="100" width="12" height="14" rx="6" fill="#8c9498" />
      <path d="M50 102v12M54 102v12M58 102v12M62 102v12M66 102v12M70 102v12M74 102v12M78 102v12M82 102v12" stroke="#111" strokeWidth="2" />
      <path d="M18 4h78q6 0 7 7l9 80q0 9-8 9H10q-8 0-8-9l8-80q1-7 8-7z" fill="url(#hd)" stroke="#889298" strokeWidth="1.500" />
      <path d="M24 25h51v6C50 40 17 50 17 66a40 31 0 0 0 80 4L92 8H24z" fill="none" stroke="#667077" strokeWidth="1.500" />
      <path d="M97 65C97 80 84 94 57 94S18 82 17 65" fill="none" stroke="#e8f2f6" strokeWidth="1.500" />
      <circle cx="57" cy="62" r="17" fill="#b9c8d0" stroke="#76828a" />
      <rect x="26" y="9" width="49" height="15" fill="#23272a" /><path d="M68 12l5 8H63z" fill="#fff" />
      <path d="M28 14h30M28 17h26M28 20h31" stroke="#777" strokeWidth="1.200" />
      <g fill="#505a60"><circle cx="16" cy="9" r="2" /><circle cx="99" cy="9" r="2" /><circle cx="12" cy="48" r="2" /><circle cx="102" cy="48" r="2" /><circle cx="8" cy="94" r="2" /><circle cx="106" cy="94" r="2" /></g>
    </svg>
    <DriveName>Macintosh HD</DriveName>
  </DriveSpot>
);
const BackWindow = styled.div`
  position: absolute; left: 2800px; top: 258px; width: 326px; height: 900px; padding: 34px 37px;
  display: flex; justify-content: flex-end; background: #e4e4e6; border: 1px solid #b4b4b4; border-radius: 20px;
  box-shadow: 0 4px 18px rgba(0,0,0,.25);
`;
const PageIcon = styled.svg`position: absolute; left: 3134px; top: 260px; filter: drop-shadow(0 1px 3px rgba(0,0,0,.25));`;

/* ------------------------------------------------------------ main window */

const MainWin = styled.section`
  position: absolute; left: 22px; top: 30px; width: 2996px; height: 1744px; overflow: hidden;
  display: flex; flex-direction: column; background: #ececec; border-radius: 20px;
`;
const MainShadow = styled.div`
  position: absolute; left: 22px; top: 30px; width: 2996px; height: 1744px; border-radius: 20px;
  box-shadow: 0 0 0 1px rgba(0,0,0,.25), 0 16px 40px rgba(0,0,0,.35);
`;
const TitleBar = styled.header`
  flex: none; height: ${(p) => p.$h}px; display: grid; grid-template-columns: 1fr auto 1fr; align-items: center;
  background: ${(p) => p.$bg}; border-bottom: 2px solid #cfcfcf; padding-bottom: 2px;
  font-weight: 700; font-size: 26px; letter-spacing: -.15px; color: #48484a;
`;
const Lights = styled.div`display: flex; gap: 16px; padding-left: ${(p) => p.$pad}px;`;
const Light = styled.span`width: 24px; height: 24px; border-radius: 50%; background: ${(p) => p.$c}; border: 1px solid rgba(0,0,0,.14);`;

const Bar = styled.div`
  flex: none; height: ${(p) => p.$h}px; display: flex; align-items: center; padding-top: ${(p) => p.$pt}px;
  background: linear-gradient(#f6f6f6, #eaeaea); border-bottom: 3px solid #b3b3b3;
`;
const Cell = styled.span`
  flex: none; width: 66px; height: 62px; display: flex; align-items: center; justify-content: center; position: relative;
  ${(p) => p.$on && css`
    &::before { content: ''; position: absolute; inset: 0 2px; border: 2px solid #a5a5a5; border-radius: 4px; background: #dbdbdb; }
    & > svg { position: relative; }
  `}
`;
const DropCell = styled.span`flex: none; width: 24px; display: flex; justify-content: center;`;
const Sep = styled.i`flex: none; width: 14px; height: 40px; background: linear-gradient(90deg, transparent 6px, #c9c9c9 6px 8px, #fff 8px 9px, transparent 9px);`;
const Grip = styled.i`
  flex: none; width: ${(p) => p.$w}px; height: 36px; padding-left: ${(p) => p.$w - 15}px; 
  &::after { content: ''; display: block; width: 10px; height: 36px; background: radial-gradient(circle at 2px 2px, #b9b9b9 1.300px, transparent 1.600px) 0 0 / 6px 6px; }
`;
const Corner = styled.span`position: absolute; right: 3px; bottom: 2px; display: flex;`;

const BARS = [
  [75, 'g25 newFile open save layout layoutMgr style g32 *hand panSel zoomIn zoomOut zoomFull zoomSel zoomLayer -zoomNative zoomLast -zoomNext newMap new3d bookmark bookmarks clock refresh g32 identify table abacus *gear sigma measure v tip -gearGrey v annot v', 0],
  [78, 'g25 addLayer gpkgNew vNew featherNew chipNew | vboxNew | g32 -pencils+ pencil -saveEd -addFeat -vertex v -multiEdit -trash -cut -copy -paste -undo -redo g32 tag pie | tagPin tagRed | -tagPinG -tagEye -tagMove -tagRot -tagEdit g32 hex globeBin g32 python g32 book g32', 3],
  [76, 'g25 selRect v selForm v selNone v selPin', 6],
];
const ToolBar = ({ h, spec, pt }) => (
  <Bar $h={h} $pt={pt}>
    {spec.split(' ').map((t, i) => {
      if (t === 'v') return <DropCell key={i}><Tri $dir="down" /></DropCell>;
      if (t === '|') return <Sep key={i} />;
      if (/^g\d/.test(t)) return <Grip key={i} $w={+t.slice(1)} />;
      const name = t.replace(/[*+-]/g, '');
      return (
        <Cell key={i} $on={t[0] === '*'}>
          <Icon n={name} dim={t[0] === '-'} />
          {t.endsWith('+') && <Corner><Tri $dir="down" /></Corner>}
        </Cell>
      );
    })}
  </Bar>
);

const Body = styled.div`flex: none; height: 1395px; display: flex; padding-top: 3px;`;
const SideBar = styled.nav`
  flex: none; width: 103px; display: flex; flex-direction: column; padding-top: 6px;
  background: linear-gradient(90deg, #f6f6f6, #ebebeb); border-right: 2px solid #b3b3b3;
`;
const HGrip = styled.i`
  display: block; width: 36px; height: 10px; margin: ${(p) => p.$m || '0'};
  background: radial-gradient(circle at 2px 2px, #bbb 1.300px, transparent 1.600px) 0 0 / 6px 6px;
`;
const SideItem = styled.span`
  height: 64px; padding-left: 16px; display: flex; align-items: center; gap: 12px;
`;
const SIDE = ['vAdd', 'raster', 'mesh', 'comma', 'featherAdd', 'vboxAdd', 'pgAdd v', 'wmsAdd v', 'wcsAdd', 'wfsAdd v', 'vNew v'];

const Docks = styled.div`flex: none; width: 588px; display: flex; flex-direction: column; padding-left: 2px;`;
const DockTitle = styled.div`
  flex: none; height: ${(p) => p.$h}px; display: flex; align-items: center; justify-content: space-between;
  padding: 0 3px 2px 8px; font-size: 22.500px; color: #222;
`;
const DockBtns = styled.span`display: flex; gap: 6px;`;
const DockBtn = ({ x }) => (
  <svg width="22" height="22" viewBox="0 0 22 22" fill="none" stroke="#777" strokeWidth="2">
    <rect x="1" y="1" width="20" height="20" rx="4" />
    {x ? <path d="M6 6l10 10M16 6L6 16" strokeWidth="3.400" /> : <path d="M9 5h8v8H9zM5 9h8v8H5z" />}
  </svg>
);
const DockTools = styled.div`flex: none; height: ${(p) => p.$h}px; display: flex; align-items: center; padding: 0 0 3px 15px; gap: 19.500px;`;
const WithDrop = styled.span`display: flex; align-items: center; gap: 13px; margin-right: 4px;`;
const TreeBox = styled.div`
  flex: none; width: 586px; height: ${(p) => p.$h}px; display: flex; background: #fff; border: 1.500px solid #b5b5b5; overflow: hidden;
`;
const TreeList = styled.ul`flex: 1; min-width: 0; margin: 0; padding: 0; list-style: none;`;
const TreeRow = styled.li`
  height: 36px; display: flex; align-items: center; white-space: nowrap; color: #111; font-size: 25px;
`;
const Twist = styled.span`flex: none; width: 46px; padding-left: 15px; display: flex;`;
const TreeText = styled.span`margin-left: 12px; letter-spacing: .25px;`;
const VScroll = styled.div`
  flex: none; width: ${(p) => p.$w}px; display: flex; flex-direction: column; border-left: 1.500px solid #bbb;
  background: linear-gradient(90deg, #ebebeb, #fdfdfd 60%);
`;
const ScrollBtn = styled.span`flex: none; height: 27px; width: 100%; display: flex; align-items: center; justify-content: center; background: #fdfdfd; border: solid #bbb; border-width: ${(p) => (p.$end ? '1.5px 0 0' : '0 0 1.5px')};`;
const Track = styled.span`flex: 1;`;
const Thumb = styled.span`flex: none; height: ${(p) => p.$h}px; background: #e2e2e2; border-top: 1.500px solid #bbb;`;

const TREE = [
  ['fav', 'Favorites'], ['bookmarks', 'Spatial Bookmarks', 1], ['projHome', 'Project Home', 1], ['home', 'Home', 1],
  ['folder', '/', 1], ['folder', '/Volumes', 1], ['gpkg', 'GeoPackage'], ['feather', 'SpatiaLite'], ['pg', 'PostGIS'],
  ['mssql', 'MSSQL'], ['oracle', 'Oracle'], ['db2', 'DB2'], ['wms', 'WMS/WMTS'], ['vtiles', 'Vector Tiles'],
  ['xyz', 'XYZ Tiles', 1], ['wcs', 'WCS'], ['wfs', 'WFS / OGC API - Features'], ['ows', 'OWS'], ['wms', 'ArcGIS Map Service'],
];

const Check = styled.span`
  flex: none; width: ${(p) => p.$s || 28}px; height: ${(p) => p.$s || 28}px; display: flex; align-items: center; justify-content: center;
  background: ${(p) => (p.$off ? 'transparent' : '#fff')}; border: 2px solid ${(p) => (p.$off ? '#bdbdbd' : '#aeaeae')};
`;
const Tick = () => <svg width="18" height="20" viewBox="0 0 18 20"><path d="M2 10l4.500 7L15 2" fill="none" stroke="#111" strokeWidth="3.400" /></svg>;
const CheckBox = ({ on, off, s }) => <Check $off={off} $s={s}>{on && <Tick />}</Check>;

const LayerRow = styled.div`
  height: ${(p) => p.$h || 36}px; display: flex; align-items: center; padding-left: ${(p) => p.$pad || 46}px; white-space: nowrap;
  background: ${(p) => (p.$sel ? '#dcdcdc' : 'transparent')}; font-size: 25px;
`;
const LayerName = styled.span`
  margin-left: 12px; font-weight: ${(p) => (p.$plain ? 400 : 700)}; letter-spacing: ${(p) => (p.$plain ? 0.25 : 0.75)}px; color: ${(p) => (p.$mute ? '#858585' : '#1c1c1c')};
  font-style: ${(p) => (p.$mute ? 'italic' : 'normal')};
  ${(p) => p.$u && css`text-decoration: underline; text-decoration-thickness: 2.5px; text-underline-offset: 4px; color: #000;`}
`;
const SymBox = styled.span`flex: none; width: 32px; height: 32px; margin-left: 12px; display: flex; align-items: center; justify-content: center;`;
const Swatch = styled.i`
  flex: none; display: block; width: ${(p) => p.$s}px; height: ${(p) => p.$s}px; background: ${(p) => p.$c}; border: ${(p) => (p.$s > 40 ? '2px solid #1a567e' : '1px solid rgba(0,0,0,.4)')};
`;
const Dot = styled.i`width: 7px; height: 7px; border-radius: 50%; background: ${(p) => p.$c}; border: 1px solid #666;`;
const Spacer = styled.span`flex: 1;`;
const MemBadge = styled.span`width: 33px; height: 33px; margin-right: 8px; display: flex; align-items: center; justify-content: center; background: #fafafa; border: 1px solid #c4c4c4; border-radius: 4px;`;
const LayersList = styled.div`flex: 1;`;

/* -------------------------------------------------------------------- map */

const KX = 780 / 1568;
const KY = 750 / 1568;
const OUTLINE = [[55, 55], [820, 50], [820, 62], [800, 82], [780, 98], [765, 112], [750, 122], [745, 140], [750, 155], [775, 172], [805, 182], [830, 200], [850, 215], [888, 213], [900, 240], [915, 255], [930, 285], [935, 305], [955, 330], [975, 355], [985, 382], [1010, 392], [1035, 412], [1065, 430], [1085, 452], [1090, 480], [1110, 495], [1140, 505], [1170, 525], [1183, 548], [1172, 562], [1172, 580], [1195, 590], [1210, 605], [1230, 620], [1232, 632], [1262, 645], [1295, 668], [1312, 690], [1315, 710], [1335, 742], [1335, 770], [1340, 800], [1350, 815], [1380, 827], [1405, 855], [1398, 880], [1420, 900], [1425, 915], [1420, 935], [1430, 945], [1432, 965], [1460, 975], [1475, 990], [1490, 985], [1512, 1000], [1500, 1015], [1475, 1022], [1470, 1032], [1480, 1035], [1445, 1050], [1452, 1062], [1440, 1080], [1420, 1092], [1405, 1090], [1410, 1100], [1423, 1102], [1420, 1130], [1408, 1145], [1385, 1153], [1408, 1157], [1400, 1175], [1378, 1215], [1378, 1240], [1360, 1270], [1345, 1280], [1340, 1315], [1315, 1325], [1338, 1332], [1330, 1370], [1325, 1412], [1270, 1408], [1235, 1395], [1190, 1388], [1170, 1380], [1160, 1392], [1148, 1382], [1142, 1400], [1145, 1425], [1155, 1455], [1150, 1480], [1147, 1523], [1105, 1525], [1095, 1510], [1095, 1475], [1087, 1458], [283, 1413], [268, 1400], [258, 1365], [245, 1330], [225, 1285], [215, 1265], [207, 1235], [215, 1195], [225, 1160], [218, 1125], [217, 1105], [203, 1080], [198, 1060], [205, 1030], [217, 1010], [222, 970], [225, 955], [250, 937], [288, 932], [265, 928], [272, 915], [240, 900], [250, 890], [245, 850], [225, 828], [210, 790], [200, 765], [192, 745], [184, 728]];
/* x, y, spread, count */
const CLUSTERS = [[435, 415, 66, 620], [440, 430, 28, 420], [392, 392, 22, 160], [420, 475, 18, 110], [430, 525, 12, 40], [520, 375, 38, 230], [500, 310, 40, 80], [595, 270, 14, 30], [620, 350, 60, 60], [1142, 532, 20, 100], [1435, 988, 18, 80], [1400, 1000, 36, 36], [260, 845, 11, 100], [645, 735, 18, 50], [652, 805, 12, 34], [733, 384, 15, 50], [495, 1137, 14, 34], [765, 1365, 8, 26], [258, 125, 22, 34], [185, 287, 14, 18], [170, 80, 30, 30], [260, 210, 22, 16], [1318, 1262, 14, 20], [1275, 1060, 9, 14], [1225, 868, 8, 8], [465, 600, 16, 26], [228, 677, 12, 12], [350, 560, 35, 46], [690, 1172, 12, 10], [320, 450, 22, 40], [215, 495, 16, 14], [875, 825, 8, 8], [560, 490, 40, 50], [1320, 940, 50, 26], [1280, 1385, 26, 12], [330, 300, 45, 30], [380, 1360, 12, 8], [440, 710, 12, 8], [560, 1370, 8, 8], [870, 960, 6, 5], [1048, 1250, 6, 6]];
const LINES = [[80, 182, 225, 182], [102, 277, 190, 277], [112, 342, 325, 342], [150, 550, 240, 550], [347, 85, 347, 240], [225, 92, 225, 182], [357, 55, 357, 95], [467, 200, 467, 340], [270, 400, 270, 530], [283, 615, 283, 728], [184, 728, 315, 728], [120, 400, 228, 400], [233, 1297, 545, 1297], [547, 1125, 547, 1310], [547, 1310, 675, 1310], [345, 1183, 547, 1183], [258, 1125, 600, 1125], [665, 912, 665, 1065], [580, 912, 665, 912], [605, 640, 755, 628], [687, 550, 687, 632], [720, 628, 765, 760], [765, 760, 855, 955], [700, 855, 870, 780], [797, 1050, 930, 935], [1030, 1318, 1187, 1318], [1030, 1318, 1030, 1452], [860, 1265, 860, 1445], [835, 1263, 1030, 1263], [1030, 1387, 1110, 1387], [1110, 1387, 1090, 1458], [430, 1300, 430, 1420], [525, 1315, 525, 1425], [625, 1312, 625, 1430], [345, 1030, 480, 1035], [268, 1030, 350, 1030], [345, 835, 345, 930], [333, 735, 333, 820], [225, 820, 333, 820], [467, 262, 560, 262], [510, 690, 510, 745], [860, 1336, 930, 1312], [930, 1312, 955, 1350], [955, 1350, 1005, 1335]];
const ISOS = [
  [[302, 245], [345, 240], [350, 215], [380, 205], [430, 215], [440, 245], [430, 270], [440, 300], [415, 315], [395, 320], [385, 340], [378, 315], [345, 300], [318, 300], [345, 285], [345, 270], [310, 280]],
  [[330, 578], [345, 562], [375, 552], [408, 535], [412, 565], [440, 580], [470, 600], [480, 612], [470, 650], [440, 650], [415, 662], [400, 655], [375, 665], [345, 630], [365, 622], [335, 600]],
  [[680, 665], [715, 685], [740, 672], [765, 655], [815, 640], [825, 680], [848, 695], [805, 700], [820, 740], [808, 770], [770, 765], [745, 800], [730, 760], [690, 760], [668, 720], [680, 690]],
  [[1005, 600], [1035, 575], [1060, 600], [1085, 578], [1100, 560], [1090, 530], [1110, 515], [1165, 525], [1175, 545], [1175, 590], [1155, 620], [1130, 610], [1105, 655], [1085, 650], [1085, 620], [1040, 640], [1010, 640]],
  [[1065, 760], [1110, 750], [1140, 755], [1165, 725], [1175, 745], [1200, 745], [1175, 765], [1180, 780], [1200, 800], [1195, 830], [1165, 835], [1140, 855], [1115, 840], [1090, 865], [1085, 840], [1045, 820], [1042, 800], [1065, 800]],
  [[475, 980], [520, 990], [525, 970], [545, 985], [555, 950], [625, 935], [640, 965], [665, 1010], [685, 1020], [655, 1030], [665, 1065], [610, 1060], [570, 1055], [550, 1095], [545, 1060], [540, 1035], [500, 1045], [485, 1030], [515, 1010]],
  [[1195, 1130], [1208, 1165], [1195, 1200], [1220, 1215], [1245, 1215], [1270, 1240], [1240, 1245], [1215, 1270], [1180, 1270], [1155, 1298], [1140, 1275], [1105, 1270], [1140, 1235], [1085, 1230], [1075, 1222], [1095, 1205], [1085, 1175], [1140, 1180], [1155, 1200], [1175, 1195], [1185, 1150]],
];
const SITES = [[378, 267], [395, 606], [753, 723], [1097, 589], [1128, 798], [573, 1013], [1172, 1213]];

function rng(seed) {
  let a = seed;
  return () => {
    a = (a + 0x6d2b79f5) | 0;
    let t = Math.imul(a ^ (a >>> 15), 1 | a);
    t = (t + Math.imul(t ^ (t >>> 7), 61 | t)) ^ t;
    return ((t ^ (t >>> 14)) >>> 0) / 4294967296;
  };
}
function inside(x, y, poly) {
  let c = false;
  for (let i = 0, j = poly.length - 1; i < poly.length; j = i++) {
    const [xi, yi] = poly[i];
    const [xj, yj] = poly[j];
    if (yi > y !== yj > y && x < ((xj - xi) * (y - yi)) / (yj - yi) + xi) c = !c;
  }
  return c;
}
function jag(a, b, amp, r, depth) {
  if (depth === 0) return [b];
  const dx = b[0] - a[0];
  const dy = b[1] - a[1];
  const k = (r() - 0.5) * amp;
  const m = [(a[0] + b[0]) / 2 - dy * k, (a[1] + b[1]) / 2 + dx * k];
  return [...jag(a, m, amp, r, depth - 1), ...jag(m, b, amp, r, depth - 1)];
}
const pt = ([x, y]) => `${(x * KX).toFixed(1)} ${(y * KY).toFixed(1)}`;

function buildTracts() {
  const r = rng(77);
  const pts = [];
  while (pts.length < 860) {
    let best = null;
    let bd = -1;
    for (let k = 0; k < 2; k++) {
      const x = 50 + r() * 1470;
      const y = 45 + r() * 1480;
      if (!inside(x, y, OUTLINE)) continue;
      if (x > 860 && x < 1120 && y > 1270 && r() < 0.92) continue;
      if (y < 620 && x < 1000 && r() < 0.15) continue;
      let d = 1e9;
      for (const p of pts) d = Math.min(d, (p[0] - x) ** 2 + (p[1] - y) ** 2);
      if (d > bd && d > 190) { bd = d; best = [x, y]; }
    }
    if (best) pts.push(best);
  }
  const base = pts.length;
  for (const [cx, cy, s, n] of CLUSTERS) {
    for (let i = 0; i < n; i++) {
      const g = Math.sqrt(-2 * Math.log(r() + 1e-9)) * s;
      const a = r() * Math.PI * 2;
      const x = cx + Math.cos(a) * g;
      const y = cy + Math.sin(a) * g;
      if (inside(x, y, OUTLINE)) pts.push([x, y]);
    }
  }
  const out = [];
  for (let i = 0; i < pts.length; i++) {
    const [px, py] = pts[i];
    const near = [];
    for (let j = 0; j < pts.length; j++) {
      if (j === i) continue;
      const d = (pts[j][0] - px) ** 2 + (pts[j][1] - py) ** 2;
      if (d < 40000) near.push([d, j]);
    }
    near.sort((a, b) => a[0] - b[0]);
    let cell = [[px - 110, py - 110, -1], [px + 110, py - 110, -1], [px + 110, py + 110, -1], [px - 110, py + 110, -1]];
    for (const [d, j] of near) {
      let far = 0;
      for (const v of cell) far = Math.max(far, (v[0] - px) ** 2 + (v[1] - py) ** 2);
      if (d > 4 * far) break;
      const mx = (px + pts[j][0]) / 2;
      const my = (py + pts[j][1]) / 2;
      const nx = pts[j][0] - px;
      const ny = pts[j][1] - py;
      const side = (v) => (v[0] - mx) * nx + (v[1] - my) * ny;
      const next = [];
      for (let k = 0; k < cell.length; k++) {
        const a = cell[k];
        const b = cell[(k + 1) % cell.length];
        const sa = side(a);
        const sb = side(b);
        if (sa <= 0) next.push(a);
        if ((sa <= 0) !== (sb <= 0)) {
          const t = sa / (sa - sb);
          next.push([a[0] + (b[0] - a[0]) * t, a[1] + (b[1] - a[1]) * t, sa <= 0 ? j : a[2]]);
        }
      }
      cell = next;
    }
    for (let k = 0; k < cell.length; k++) {
      const a = cell[k];
      if (a[2] <= i) continue;
      const b = cell[(k + 1) % cell.length];
      const len = Math.hypot(a[0] - b[0], a[1] - b[1]);
      if (i < base && a[2] < base && (i * 7 + a[2] * 13) % 9 === 0) continue;
      const straight = r() < 0.3;
      const seg = len > 12 && !straight ? jag(a, b, 0.7, r, len > 26 ? 3 : 2) : [b];
      out.push(`M${pt(a)}L${seg.map(pt).join('L')}`);
    }
  }
  return out.join('');
}
function ring(poly, amp, depth, seed, keepLong) {
  const r = rng(seed);
  const res = [];
  poly.forEach((a, i) => {
    const b = poly[(i + 1) % poly.length];
    const long = Math.hypot(a[0] - b[0], a[1] - b[1]) > 300;
    res.push(...(keepLong && long ? [b] : jag(a, b, amp, r, depth)));
  });
  return `M${res.map(pt).join('L')}Z`;
}

const Canvas = styled.main`
  flex: none; width: 1354px; margin-left: 13px; padding: 339px 0 0 273px; background: #fff; border: 1.500px solid #b5b5b5;
`;
const GeorgiaMap = () => {
  const tracts = useMemo(buildTracts, []);
  const outline = useMemo(() => ring(OUTLINE, 0.35, 2, 5, true), []);
  const isos = useMemo(() => ISOS.map((p, i) => ring(p, 1.25, 3, 40 + i)), []);
  return (
    <svg width="780" height="750" viewBox="0 0 780 750">
      <clipPath id="ga"><path d={outline} /></clipPath>
      <path d={outline} fill="#b3c4e5" />
      <g clipPath="url(#ga)" fill="none" stroke="#232323" strokeWidth="1.300" strokeLinejoin="round">
        <path d={tracts} />
        <path d={LINES.map(([a, b, c, d]) => `M${pt([a, b])}L${pt([c, d])}`).join('')} />
      </g>
      <path d={outline} fill="none" stroke="#232323" strokeWidth="1.500" strokeLinejoin="round" />
      {isos.map((d, i) => <path key={i} d={d} fill="#3a8fc8" fillOpacity=".6" stroke="#45627f" strokeWidth="1" />)}
      {SITES.map(([x, y], i) => <circle key={i} cx={x * KX} cy={y * KY} r="4.500" fill={i === 3 ? '#e8921a' : '#a39a62'} stroke="#6a6850" strokeWidth="1.200" />)}
    </svg>
  );
};
const MapSplit = styled.div`flex: none; width: 14px;`;
const ToolboxDock = styled.aside`flex: 1; display: flex; flex-direction: column;`;
const ToolboxBody = styled.div`flex: 1; background: #fff; border: 1.500px solid #b5b5b5; margin-right: 2px;`;

/* ------------------------------------------------------------- status bar */

const Status = styled.footer`flex: 1; display: flex; align-items: center; position: relative; padding: 0 0 0 8px; font-size: 22.500px; color: #111; white-space: nowrap;`;
const Locator = styled.div`
  width: 428px; height: 46px; display: flex; align-items: center; padding-left: 16px; gap: 12px; background: #fff;
  border: 2px solid #a9a9a9; border-radius: 5px; font-size: 25px; color: #868686; letter-spacing: .3px;
`;
const StatusText = styled.span`width: ${(p) => p.$w}px; margin-left: ${(p) => p.$ml || 0}px; letter-spacing: -.2px;`;
const Field = styled.span`
  width: ${(p) => p.$w}px; height: ${(p) => p.$h || 43}px; margin-left: ${(p) => p.$ml || 0}px; display: flex; align-items: stretch; background: #fff;
  border: 2px solid #a3a3a3; border-radius: 4px; overflow: hidden;
`;
const FieldText = styled.span`flex: 1; display: flex; align-items: center; padding-left: ${(p) => p.$p || 6}px; letter-spacing: -.2px;`;
const Stepper = styled.span`width: 27px; display: flex; flex-direction: column; align-items: center; justify-content: center; gap: 9px; border-left: 1.500px solid #b0b0b0; background: #f6f6f6;`;
const DropBtn = styled.span`width: 40px; display: flex; align-items: center; justify-content: center; border-left: 1.500px solid #ccc; background: #f6f6f6;`;
const Gap = styled.span`flex: none; width: ${(p) => p.$w}px; display: flex; justify-content: center; padding: 0 ${(p) => p.$pr || 0}px 0 ${(p) => p.$pl || 0}px;`;

/* ----------------------------------------------------------------- dialog */

const Dialog = styled.section`
  position: absolute; left: 1910px; top: 338px; width: 1376px; height: 1295px; display: flex; flex-direction: column;
  background: #ececec; border-radius: 20px; overflow: hidden; letter-spacing: .3px;
`;
const DialogShadow = styled.div`
  position: absolute; left: 1910px; top: 338px; width: 1376px; height: 1295px; border-radius: 20px;
  box-shadow: 0 0 0 1.500px rgba(0,0,0,.28), 0 30px 70px rgba(0,0,0,.5), 0 0 30px rgba(0,0,0,.2);
`;
const Upper = styled.div`flex: none; height: 1052px; display: flex; padding: 22px 23px 0 22px;`;
const Left = styled.div`flex: none; width: 786px; display: flex; flex-direction: column;`;
const Tabs = styled.div`flex: none; height: 52px; display: flex; align-items: flex-end;`;
const Tab = styled.span`
  height: ${(p) => (p.$on ? 54 : 50)}px; width: ${(p) => p.$w}px; display: flex; align-items: center; justify-content: center; position: relative; z-index: 1;
  margin-bottom: ${(p) => (p.$on ? -2 : 0)}px; background: ${(p) => (p.$on ? '#fbfbfb' : '#e3e3e3')}; color: #222; letter-spacing: .15px;
  border: 2px solid #a9a9a9; border-bottom: ${(p) => (p.$on ? 'none' : '0')}; border-radius: 5px 5px 0 0; margin-left: ${(p) => (p.$on ? 0 : -2)}px;
`;
const Panel = styled.div`flex: none; height: 977px; display: flex; flex-direction: column; border: 2px solid #a9a9a9; border-left-width: 1.500px; overflow: hidden;`;
const Form = styled.div`flex: 1; display: flex; flex-direction: column; padding: 0 2px 0 11px; overflow: hidden;`;
const Label = styled.label`flex: none; height: ${(p) => p.$h || 57.500}px; padding-bottom: 1px; display: flex; align-items: center; white-space: nowrap; color: #000;`;
const Combo = styled.div`
  flex: none; height: 46px; width: ${(p) => (p.$w ? `${p.$w}px` : '790px')}; display: flex; align-items: center; padding: 0 13px 0 ${(p) => p.$p || 8}px; gap: 9px; white-space: nowrap;
  border: 2px solid #a9a9a9; border-radius: 5px; background: ${(p) => (p.$flat ? '#fff' : 'linear-gradient(#fff, #ececec)')}; color: ${(p) => (p.$mute ? '#868686' : '#000')};
  ${(p) => p.$flat && css`box-shadow: inset 0 2px 1px #e4e4e4;`}
`;
const Row = styled.div`flex: none; height: 47px; display: flex; align-items: center; gap: ${(p) => p.$gap || 0}px; margin-top: ${(p) => p.$mt || 0}px; white-space: nowrap; color: ${(p) => p.$c || '#222'};`;
const Stub = styled.i`flex: none; width: 30px; height: ${(p) => p.$h || 46}px; border: 2px solid #a9a9a9; border-radius: 5px; background: #f4f4f4;`;
const Bold = styled.b`font-weight: 700; letter-spacing: .75px; color: #000;`;
const HScroll = styled.div`flex: none; height: 29px; display: flex; margin: 0 2px; border-top: 1.500px solid #b5b5b5; background: linear-gradient(#fdfdfd, #eee);`;
const HBtn = styled.span`flex: none; width: 28px; display: flex; align-items: center; justify-content: center; background: #fdfdfd; border: solid #bbb; border-width: 0 ${(p) => (p.$end ? 0 : 1.500)}px 0 ${(p) => (p.$end ? 1.500 : 0)}px;`;
const HThumb = styled.span`flex: none; width: 44px; background: #e2e2e2; border-left: 1.500px solid #bbb;`;
const SplitCol = styled.div`flex: none; width: 34px; display: flex; flex-direction: column; padding: 4px 0 0 10px;`;
const VDots = styled.i`width: 4px; height: 34px; margin: 482px 0 0 7px; background: radial-gradient(circle at 2px 2px, #bbb 1.300px, transparent 1.600px) 0 0 / 6px 6px;`;
const Help = styled.article`flex: 1; height: 1030px; display: flex; background: #fff; border: 1.500px solid #b5b5b5; overflow: hidden;`;
const HelpText = styled.div`
  flex: 1; padding: 4px 0 0 9px; color: #666; line-height: 32px; white-space: nowrap; font-size: 24.500px; letter-spacing: .22px; overflow: hidden;
  h1 { margin: 0 0 18px; height: 58px; display: flex; align-items: center; font-size: 38.500px; font-weight: 700; color: #555; letter-spacing: -.1px; }
  p { margin: 0 0 24px; }
  a { color: #3498db; font-weight: 700; letter-spacing: .6px; text-decoration: underline; text-decoration-thickness: 2.500px; text-underline-offset: 4px; text-decoration-skip-ink: none; }
  b { color: #333; font-weight: 700; letter-spacing: .75px; }
`;
const Play = styled.i`display: inline-block; margin: 0 4px 0 2px; border: solid transparent; border-width: 10px 0 10px 19px; border-left-color: #666;`;
const Lower = styled.div`display: grid; grid-template-columns: 160px 300px 1fr 160px 160px; gap: 12px; padding: 58px 22px 0; `;
const Btn = styled.button`
  height: 48px; padding: 0; font: inherit; letter-spacing: .3px; white-space: nowrap; border-radius: 5px; color: ${(p) => (p.$off ? '#b5b5b5' : '#222')};
  border: 2px solid ${(p) => (p.$main ? '#5a9be6' : p.$off ? '#c4c4c4' : '#a5a5a5')};
  background: ${(p) => (p.$main ? 'linear-gradient(#fff, #dfe4ea)' : 'linear-gradient(#fff, #ececec)')};
`;
const Progress = styled.div`grid-column: 1 / 5; height: 48px; display: flex; align-items: center; justify-content: center; background: #fff; border: 2px solid #9c9c9c; border-radius: 5px; color: #222;`;

const Resizer = styled.i`position: absolute; right: 2px; bottom: 2px; width: 24px; height: 20px; background: radial-gradient(circle at 2px 2px, #bbb 1.300px, transparent 1.600px) 0 0 / 6px 6px; clip-path: polygon(100% 0, 100% 100%, 0 100%);`;

export default function App() {
  return (
    <>
      <Global />
      <Desktop>
        <Wallpaper />
        <Drive />
        <PageIcon width="90" height="120" viewBox="0 0 90 120">
          <path d="M1 2H54L87 34V120H1z" fill="#f1f1f0" /><path d="M54 2l33 32H60q-6 0-6-6z" fill="#fcfcfc" stroke="#d4d4d4" />
        </PageIcon>
        <BackWindow><Icon n="search" s={34} /></BackWindow>
        <MainShadow />
        <MainWin>
          <TitleBar $h={58} $bg="#f1f2f4">
            <Lights $pad={16}><Light $c="#d6d7d9" /><Light $c="#d6d7d9" /><Light $c="#d6d7d9" /></Lights>
            <span>*georgiaVaccineSites — QGIS</span>
            <span />
          </TitleBar>
          {BARS.map(([h, spec, pad]) => <ToolBar key={h} h={h} spec={spec} pt={pad} />)}
          <Body>
            <SideBar>
              <HGrip $m="0 0 8px 37px" />
              {SIDE.map((s) => {
                const [n, v] = s.split(' ');
                return <SideItem key={n}><Icon n={n} />{v && <Tri $dir="down" />}</SideItem>;
              })}
            </SideBar>
            <Docks>
              <DockTitle $h={38}>Browser<DockBtns><DockBtn /><DockBtn x /></DockBtns></DockTitle>
              <DockTools $h={62}>
                {['addBox', 'refresh', 'filter', 'treeUp', 'info'].map((n) => <Icon key={n} n={n} s={31} />)}
              </DockTools>
              <TreeBox $h={672}>
                <TreeList>
                  {TREE.map(([n, t, open]) => (
                    <TreeRow key={t}><Twist>{open && <Tri $dir="right" />}</Twist><Icon n={n} s={32} /><TreeText>{t}</TreeText></TreeRow>
                  ))}
                </TreeList>
                <VScroll $w={28}>
                  <ScrollBtn><Tri $dir="up" /></ScrollBtn><Track /><Thumb $h={83} /><ScrollBtn $end><Tri $dir="down" /></ScrollBtn>
                </VScroll>
              </TreeBox>
              <HGrip $m="3px 0 0 278px" />
              <DockTitle $h={40}>Layers<DockBtns><DockBtn /><DockBtn x /></DockBtns></DockTitle>
              <DockTools $h={60}>
                <Icon n="brush" s={31} /><Icon n="group" s={31} /><Icon n="eye" s={31} /><Icon n="filter" s={31} />
                <WithDrop><Icon n="eps" s={31} /><Tri $dir="down" /></WithDrop>
                <Icon n="treeDown" s={31} /><Icon n="treeUp" s={31} /><Icon n="remove" s={31} />
              </DockTools>
              <TreeBox $h={507}>
                <LayersList>
                  <LayerRow $sel $h={37} $pad={13}>
                    <Tri $dir="down" /><Gap $w={17} /><CheckBox on /><SymBox><Icon n="poly" s={32} /></SymBox>
                    <LayerName $u>Isochrones</LayerName><Spacer /><MemBadge><Icon n="memChip" s={26} /></MemBadge>
                  </LayerRow>
                  <LayerRow $h={68} $pad={86}><CheckBox on /><Gap $w={12} /><Swatch $s={64} $c="#2c83bb" /><LayerName $plain>30 min</LayerName></LayerRow>
                  <LayerRow><CheckBox on /><SymBox><Dot $c="#e8921a" /></SymBox><LayerName>samplePoints</LayerName></LayerRow>
                  <LayerRow><CheckBox /><SymBox><Dot $c="#d4366e" /></SymBox><LayerName $mute>vaccineSites</LayerName></LayerRow>
                  <LayerRow><CheckBox /><SymBox><Dot $c="#8a6ab0" /></SymBox><LayerName $mute>dollarStores</LayerName></LayerRow>
                  <LayerRow><CheckBox on /><SymBox><Swatch $s={32} $c="#b3c4e5" /></SymBox><LayerName>socialVulnerabilityData</LayerName></LayerRow>
                  <LayerRow><CheckBox on /><SymBox><Swatch $s={32} $c="#c43a36" /></SymBox><LayerName>gaStateBoundary</LayerName></LayerRow>
                </LayersList>
              </TreeBox>
            </Docks>
            <Canvas><GeorgiaMap /></Canvas>
            <MapSplit />
            <ToolboxDock>
              <DockTitle $h={40}>Processing Toolbox<DockBtns><DockBtn /><DockBtn x /></DockBtns></DockTitle>
              <ToolboxBody />
            </ToolboxDock>
          </Body>
          <Status>
            <Locator><Icon n="search" s={28} />Type to locate (⌘K)</Locator>
            <StatusText $ml={16} $w={811}>2 legend entries removed.</StatusText>
            <StatusText $w={121}>Coordinate</StatusText>
            <Field $w={176}><FieldText $p={11}>-79.08,28.48</FieldText></Field>
            <Gap $w={67} $pr={18}><Icon n="mouse" s={31} /></Gap>
            <StatusText $w={65}>Scale</StatusText>
            <Field $w={184} $h={46}><FieldText>1:5257076</FieldText><DropBtn><Tri $dir="down" /></DropBtn></Field>
            <Gap $w={67} $pl={6}><Icon n="lock" s={30} /></Gap>
            <StatusText $w={107}>Magnifier</StatusText>
            <Field $w={179} $h={46}><FieldText>100%</FieldText><Stepper><Tri $dir="up" /><Tri $dir="down" /></Stepper></Field>
            <StatusText $ml={20} $w={108}>Rotation</StatusText>
            <Field $w={182}><FieldText>0.0 °</FieldText><Stepper><Tri $dir="up" /><Tri $dir="down" /></Stepper></Field>
            <Gap $w={14} /><CheckBox on s={27} />
            <StatusText $ml={11} $w={106}>Render</StatusText>
            <Icon n="crs" s={30} />
            <StatusText $ml={5} $w={169}>EPSG:4269</StatusText>
            <Icon n="bubble" s={34} />
            <Resizer />
          </Status>
        </MainWin>
        <DialogShadow />
        <Dialog>
          <TitleBar $h={56} $bg="#f2f3f8">
            <Lights $pad={16}><Light $c="#ec6a5e" /><Light $c="#d8d8dc" /><Light $c="#61c554" /></Lights>
            <span>Isochrones From Layer</span>
            <span />
          </TitleBar>
          <Upper>
            <Left>
              <Tabs><Tab $on $w={189}>Parameters</Tab><Tab $w={95}>Log</Tab></Tabs>
              <Panel>
                <Form>
                  <Label $h={55}>Provider</Label>
                  <Combo>openrouteservice</Combo>
                  <Label>Travel mode</Label>
                  <Combo>driving-car</Combo>
                  <Label>Input Point layer</Label>
                  <Row>
                    <Combo $w={612} $p={12}><Icon n="points" s={26} />samplePoints [EPSG:4326]<Spacer /><Tri $dir="down" /></Combo>
                    <Gap $w={85}><Icon n="loop" s={44} /></Gap>
                    <Gap $w={58}><Icon n="wrench" s={46} /></Gap>
                    <Gap $w={13} /><Stub $h={38} />
                  </Row>
                  <Row $gap={10} $mt={15} $c="#b3b3b3"><CheckBox off />Selected features only</Row>
                  <Label $h={55}>Input layer ID Field (mutually exclusive with Point option) [optional]</Label>
                  <Combo />
                  <Label>Dimension</Label>
                  <Combo>time</Combo>
                  <Label>Comma-separated ranges [min or m]</Label>
                  <Combo $flat $p={4}>30</Combo>
                  <Row $mt={8} $gap={18}><Gap $w={27}><Tri $dir="right" $c="#333" $big /></Gap><Bold>Advanced Parameters</Bold></Row>
                  <Label $h={50}>Isochrones</Label>
                  <Row $gap={12}><Combo $flat $mute $p={5} $w={756}>[Create temporary layer]</Combo><Stub /></Row>
                  <Row $gap={10} $mt={11}><CheckBox on />Open output file after running algorithm</Row>
                </Form>
                <HScroll><HBtn><Tri $dir="left" /></HBtn><Track /><HThumb /><HBtn $end><Tri $dir="right" /></HBtn></HScroll>
              </Panel>
            </Left>
            <SplitCol><Tri $dir="left" /><VDots /></SplitCol>
            <Help>
              <HelpText>
                <h1>Isochrones from layer</h1>
                <p>The Isochrone algorithm returns<br />service/reachability areas for multiple<br />locations and time/distance ranges.</p>
                <p>You need to have a valid API key<br />('Web' menu <Play /> 'ORS Tools' <Play /><br />'Configuration') or sign up at <a>https://</a><br /><a>openrouteservice.org/sign-up/</a>.</p>
                <p>Current <a>restriction limits</a> for the<br />openrouteservice API apply.</p>
                <p><i>Input layers</i>: only Point layers are<br />allowed,<b>not MultiPoint</b>.</p>
                <p><i>ID Field</i>: values will transfer to the<br />output layer and can be used to join<br />layers or group features afterwards.</p>
                <p><i>Ranges</i>: parameter needs to be a<br />comma-separated list of integer<br />values,no decimal points.</p>
                <p><i>Advanced Parameters</i>: see <a>the</a><br /><a>documentation</a> for descriptions.</p>
                <p><i>Output layer</i>: a Polygon layer with ID,<br />isochrone center latitude and<br />longitude,range value,travel mode and<br />total population (from <a>GHSL</a>).</p>
                <p>The CRS is EPSG:4326</p>
              </HelpText>
              <VScroll $w={29}>
                <ScrollBtn><Tri $dir="up" /></ScrollBtn><Track /><Thumb $h={177} /><ScrollBtn $end><Tri $dir="down" /></ScrollBtn>
              </VScroll>
            </Help>
          </Upper>
          <Lower>
            <Progress>0%</Progress><Btn $off>Cancel</Btn>
            <Btn>Help</Btn><Btn>Run as Batch Process...</Btn><span /><Btn>Close</Btn><Btn $main>Run</Btn>
          </Lower>
        </Dialog>
      </Desktop>
    </>
  );
}
